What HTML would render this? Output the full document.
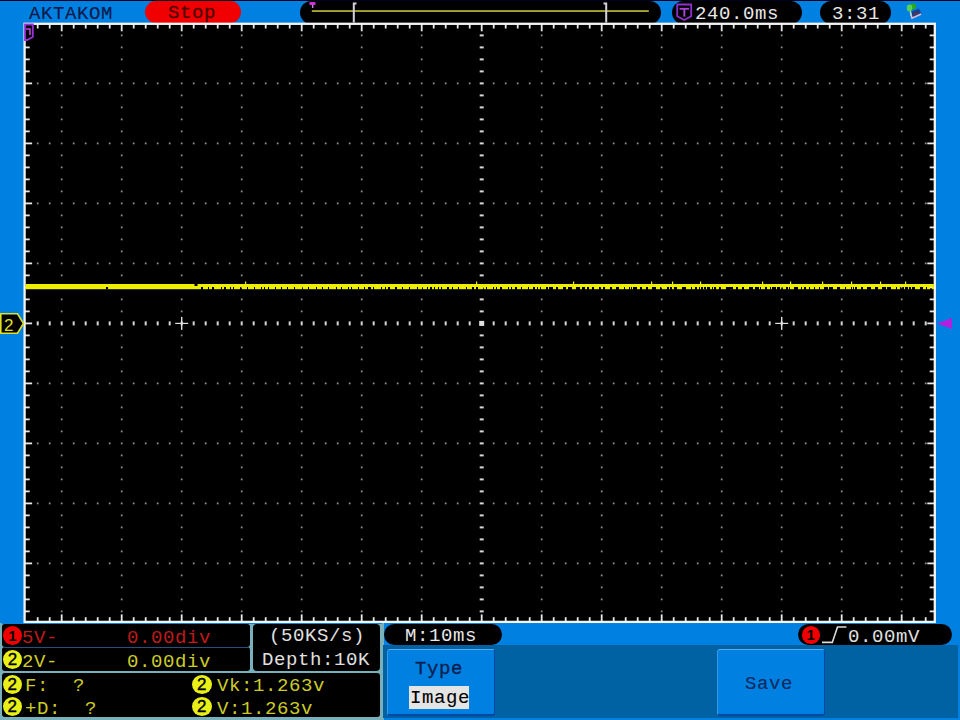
<!DOCTYPE html>
<html><head><meta charset="utf-8">
<style>
html,body{margin:0;padding:0;}
body{width:960px;height:720px;overflow:hidden;position:relative;background:#0080e0;font-family:"Liberation Mono",monospace;}
.a{position:absolute;}
.t{position:absolute;white-space:pre;line-height:1;font-size:19px;letter-spacing:0.6px;}
.pill{position:absolute;background:#000;}
.c{position:absolute;border-radius:50%;text-align:center;color:#000;font-family:"Liberation Sans",sans-serif;font-weight:bold;line-height:1;}
</style></head><body>
<div class="a" style="left:0;top:0;width:960px;height:1px;background:#000020"></div>
<div class="t" style="left:29px;top:5px;font-size:19px;letter-spacing:0.6px;color:#0a1a4a;-webkit-text-stroke:0.15px #0a1a4a">AKTAKOM</div>
<div class="pill" style="left:144.5px;top:1px;width:96px;height:21.5px;border-radius:11px;background:#f00000"></div>
<div class="t" style="left:168px;top:4px;color:#500000;-webkit-text-stroke:0.3px #500000">Stop</div>
<div class="pill" style="left:300px;top:1px;width:361px;height:23px;border-radius:12px"></div>
<div class="pill" style="left:672px;top:1px;width:130px;height:23px;border-radius:12px"></div>
<div class="t" style="left:695px;top:5px;color:#e8e8e8">240.0ms</div>
<div class="pill" style="left:820px;top:1px;width:71px;height:23px;border-radius:12px"></div>
<div class="t" style="left:832px;top:5px;color:#e8e8e8">3:31</div>

<!-- bottom -->
<div class="a" style="left:0;top:623px;width:384px;height:97px;background:#78b0bc"></div>
<div class="a" style="left:1.5px;top:622px;width:380px;height:2px;background:#0080e0"></div>
<div class="a" style="left:383px;top:645px;width:575px;height:73px;background:#0062a2"></div>
<div class="pill" style="left:1.8px;top:623.8px;width:248.2px;height:23.5px;border-radius:3px"></div>
<div class="pill" style="left:1.8px;top:647.3px;width:248.2px;height:23.9px;border-radius:3px"></div>
<div class="a" style="left:4px;top:646.7px;width:244px;height:1.2px;background:#28507a"></div>
<div class="pill" style="left:253.3px;top:623.8px;width:126.7px;height:47.2px;border-radius:4px"></div>
<div class="pill" style="left:1.5px;top:673.3px;width:378.8px;height:43.5px;border-radius:3px"></div>

<div class="c" style="left:2.9px;top:626.3px;width:19px;height:19px;background:#f00000;font-size:15px;line-height:19.5px">1</div>
<div class="t" style="left:22px;top:629px;color:#c01a1a">5V-</div>
<div class="t" style="left:127px;top:629px;color:#c01a1a">0.00div</div>
<div class="c" style="left:2.9px;top:650.2px;width:19px;height:19px;background:#e8f018;font-size:17px;font-weight:normal;-webkit-text-stroke:0.35px #000;line-height:20px">2</div>
<div class="t" style="left:22px;top:653px;color:#cccc26">2V-</div>
<div class="t" style="left:127px;top:653px;color:#cccc26">0.00div</div>

<div class="t" style="left:269px;top:627px;color:#e0e0e0">(50KS/s)</div>
<div class="t" style="left:262px;top:651px;color:#e0e0e0">Depth:10K</div>

<div class="c" style="left:2.7px;top:674.5px;width:19px;height:19px;background:#e8f018;font-size:17px;font-weight:normal;-webkit-text-stroke:0.35px #000;line-height:20px">2</div>
<div class="t" style="left:25px;top:677px;color:#cccc26">F:  ?</div>
<div class="c" style="left:2.7px;top:697.2px;width:19px;height:19px;background:#e8f018;font-size:17px;font-weight:normal;-webkit-text-stroke:0.35px #000;line-height:20px">2</div>
<div class="t" style="left:25px;top:700px;color:#cccc26">+D:  ?</div>
<div class="c" style="left:192px;top:674.5px;width:19.6px;height:19px;background:#e8f018;font-size:17px;font-weight:normal;-webkit-text-stroke:0.35px #000;line-height:20px">2</div>
<div class="t" style="left:217px;top:677px;color:#cccc26">Vk:1.263v</div>
<div class="c" style="left:192px;top:697.3px;width:19.6px;height:19px;background:#e8f018;font-size:17px;font-weight:normal;-webkit-text-stroke:0.35px #000;line-height:20px">2</div>
<div class="t" style="left:217px;top:700px;color:#cccc26">V:1.263v</div>

<div class="pill" style="left:383.5px;top:623.5px;width:118px;height:21.5px;border-radius:11px"></div>
<div class="t" style="left:405px;top:627px;color:#e8e8e8">M:10ms</div>
<div class="pill" style="left:798px;top:623.5px;width:154px;height:21px;border-radius:10.5px"></div>
<div class="c" style="left:801.5px;top:626px;width:18.5px;height:18px;background:#f00000;font-size:15px;line-height:18px">1</div>
<div class="t" style="left:848px;top:628px;color:#e0e0e0">0.00mV</div>

<div class="a" style="left:386.5px;top:648.5px;width:108px;height:67px;background:#0080e0;border-top:1.5px solid #58acf0;border-left:1.5px solid #3a98e8;border-right:1.5px solid #0048a8;border-bottom:2px solid #0048a8;box-sizing:border-box;border-radius:3px"></div>
<div class="t" style="left:415px;top:660px;color:#0a2050;-webkit-text-stroke:0.35px #0a2050">Type</div>
<div class="a" style="left:409px;top:685.5px;width:60px;height:23.5px;background:#e4e4e4"></div>
<div class="t" style="left:410px;top:689px;color:#000;-webkit-text-stroke:0.1px #000">Image</div>
<div class="a" style="left:716.5px;top:648.5px;width:108px;height:67px;background:#0080e0;border-top:1.5px solid #58acf0;border-left:1.5px solid #3a98e8;border-right:1.5px solid #0048a8;border-bottom:2px solid #0048a8;box-sizing:border-box;border-radius:3px"></div>
<div class="t" style="left:745px;top:675px;color:#0a2a60;-webkit-text-stroke:0.1px #0a2a60">Save</div>

<svg class="a" style="left:0;top:0" width="960" height="720" viewBox="0 0 960 720">
<rect x="24.60" y="23.80" width="910.20" height="598.10" fill="#000" />
<rect x="60.80" y="34.50" width="1.80" height="1.80" fill="#8c8c8c" />
<rect x="60.80" y="46.50" width="1.80" height="1.80" fill="#8c8c8c" />
<rect x="60.80" y="58.50" width="1.80" height="1.80" fill="#8c8c8c" />
<rect x="60.80" y="70.50" width="1.80" height="1.80" fill="#8c8c8c" />
<rect x="60.80" y="82.50" width="1.80" height="1.80" fill="#8c8c8c" />
<rect x="60.80" y="94.50" width="1.80" height="1.80" fill="#8c8c8c" />
<rect x="60.80" y="106.50" width="1.80" height="1.80" fill="#8c8c8c" />
<rect x="60.80" y="118.50" width="1.80" height="1.80" fill="#8c8c8c" />
<rect x="60.80" y="130.50" width="1.80" height="1.80" fill="#8c8c8c" />
<rect x="60.80" y="142.50" width="1.80" height="1.80" fill="#8c8c8c" />
<rect x="60.80" y="154.50" width="1.80" height="1.80" fill="#8c8c8c" />
<rect x="60.80" y="166.50" width="1.80" height="1.80" fill="#8c8c8c" />
<rect x="60.80" y="178.50" width="1.80" height="1.80" fill="#8c8c8c" />
<rect x="60.80" y="190.50" width="1.80" height="1.80" fill="#8c8c8c" />
<rect x="60.80" y="202.50" width="1.80" height="1.80" fill="#8c8c8c" />
<rect x="60.80" y="214.50" width="1.80" height="1.80" fill="#8c8c8c" />
<rect x="60.80" y="226.50" width="1.80" height="1.80" fill="#8c8c8c" />
<rect x="60.80" y="238.50" width="1.80" height="1.80" fill="#8c8c8c" />
<rect x="60.80" y="250.50" width="1.80" height="1.80" fill="#8c8c8c" />
<rect x="60.80" y="262.50" width="1.80" height="1.80" fill="#8c8c8c" />
<rect x="60.80" y="274.50" width="1.80" height="1.80" fill="#8c8c8c" />
<rect x="60.80" y="286.50" width="1.80" height="1.80" fill="#8c8c8c" />
<rect x="60.80" y="298.50" width="1.80" height="1.80" fill="#8c8c8c" />
<rect x="60.80" y="310.50" width="1.80" height="1.80" fill="#8c8c8c" />
<rect x="60.80" y="334.50" width="1.80" height="1.80" fill="#8c8c8c" />
<rect x="60.80" y="346.50" width="1.80" height="1.80" fill="#8c8c8c" />
<rect x="60.80" y="358.50" width="1.80" height="1.80" fill="#8c8c8c" />
<rect x="60.80" y="370.50" width="1.80" height="1.80" fill="#8c8c8c" />
<rect x="60.80" y="382.50" width="1.80" height="1.80" fill="#8c8c8c" />
<rect x="60.80" y="394.50" width="1.80" height="1.80" fill="#8c8c8c" />
<rect x="60.80" y="406.50" width="1.80" height="1.80" fill="#8c8c8c" />
<rect x="60.80" y="418.50" width="1.80" height="1.80" fill="#8c8c8c" />
<rect x="60.80" y="430.50" width="1.80" height="1.80" fill="#8c8c8c" />
<rect x="60.80" y="442.50" width="1.80" height="1.80" fill="#8c8c8c" />
<rect x="60.80" y="454.50" width="1.80" height="1.80" fill="#8c8c8c" />
<rect x="60.80" y="466.50" width="1.80" height="1.80" fill="#8c8c8c" />
<rect x="60.80" y="478.50" width="1.80" height="1.80" fill="#8c8c8c" />
<rect x="60.80" y="490.50" width="1.80" height="1.80" fill="#8c8c8c" />
<rect x="60.80" y="502.50" width="1.80" height="1.80" fill="#8c8c8c" />
<rect x="60.80" y="514.50" width="1.80" height="1.80" fill="#8c8c8c" />
<rect x="60.80" y="526.50" width="1.80" height="1.80" fill="#8c8c8c" />
<rect x="60.80" y="538.50" width="1.80" height="1.80" fill="#8c8c8c" />
<rect x="60.80" y="550.50" width="1.80" height="1.80" fill="#8c8c8c" />
<rect x="60.80" y="562.50" width="1.80" height="1.80" fill="#8c8c8c" />
<rect x="60.80" y="574.50" width="1.80" height="1.80" fill="#8c8c8c" />
<rect x="60.80" y="586.50" width="1.80" height="1.80" fill="#8c8c8c" />
<rect x="60.80" y="598.50" width="1.80" height="1.80" fill="#8c8c8c" />
<rect x="60.80" y="610.50" width="1.80" height="1.80" fill="#8c8c8c" />
<rect x="120.80" y="34.50" width="1.80" height="1.80" fill="#8c8c8c" />
<rect x="120.80" y="46.50" width="1.80" height="1.80" fill="#8c8c8c" />
<rect x="120.80" y="58.50" width="1.80" height="1.80" fill="#8c8c8c" />
<rect x="120.80" y="70.50" width="1.80" height="1.80" fill="#8c8c8c" />
<rect x="120.80" y="82.50" width="1.80" height="1.80" fill="#8c8c8c" />
<rect x="120.80" y="94.50" width="1.80" height="1.80" fill="#8c8c8c" />
<rect x="120.80" y="106.50" width="1.80" height="1.80" fill="#8c8c8c" />
<rect x="120.80" y="118.50" width="1.80" height="1.80" fill="#8c8c8c" />
<rect x="120.80" y="130.50" width="1.80" height="1.80" fill="#8c8c8c" />
<rect x="120.80" y="142.50" width="1.80" height="1.80" fill="#8c8c8c" />
<rect x="120.80" y="154.50" width="1.80" height="1.80" fill="#8c8c8c" />
<rect x="120.80" y="166.50" width="1.80" height="1.80" fill="#8c8c8c" />
<rect x="120.80" y="178.50" width="1.80" height="1.80" fill="#8c8c8c" />
<rect x="120.80" y="190.50" width="1.80" height="1.80" fill="#8c8c8c" />
<rect x="120.80" y="202.50" width="1.80" height="1.80" fill="#8c8c8c" />
<rect x="120.80" y="214.50" width="1.80" height="1.80" fill="#8c8c8c" />
<rect x="120.80" y="226.50" width="1.80" height="1.80" fill="#8c8c8c" />
<rect x="120.80" y="238.50" width="1.80" height="1.80" fill="#8c8c8c" />
<rect x="120.80" y="250.50" width="1.80" height="1.80" fill="#8c8c8c" />
<rect x="120.80" y="262.50" width="1.80" height="1.80" fill="#8c8c8c" />
<rect x="120.80" y="274.50" width="1.80" height="1.80" fill="#8c8c8c" />
<rect x="120.80" y="286.50" width="1.80" height="1.80" fill="#8c8c8c" />
<rect x="120.80" y="298.50" width="1.80" height="1.80" fill="#8c8c8c" />
<rect x="120.80" y="310.50" width="1.80" height="1.80" fill="#8c8c8c" />
<rect x="120.80" y="334.50" width="1.80" height="1.80" fill="#8c8c8c" />
<rect x="120.80" y="346.50" width="1.80" height="1.80" fill="#8c8c8c" />
<rect x="120.80" y="358.50" width="1.80" height="1.80" fill="#8c8c8c" />
<rect x="120.80" y="370.50" width="1.80" height="1.80" fill="#8c8c8c" />
<rect x="120.80" y="382.50" width="1.80" height="1.80" fill="#8c8c8c" />
<rect x="120.80" y="394.50" width="1.80" height="1.80" fill="#8c8c8c" />
<rect x="120.80" y="406.50" width="1.80" height="1.80" fill="#8c8c8c" />
<rect x="120.80" y="418.50" width="1.80" height="1.80" fill="#8c8c8c" />
<rect x="120.80" y="430.50" width="1.80" height="1.80" fill="#8c8c8c" />
<rect x="120.80" y="442.50" width="1.80" height="1.80" fill="#8c8c8c" />
<rect x="120.80" y="454.50" width="1.80" height="1.80" fill="#8c8c8c" />
<rect x="120.80" y="466.50" width="1.80" height="1.80" fill="#8c8c8c" />
<rect x="120.80" y="478.50" width="1.80" height="1.80" fill="#8c8c8c" />
<rect x="120.80" y="490.50" width="1.80" height="1.80" fill="#8c8c8c" />
<rect x="120.80" y="502.50" width="1.80" height="1.80" fill="#8c8c8c" />
<rect x="120.80" y="514.50" width="1.80" height="1.80" fill="#8c8c8c" />
<rect x="120.80" y="526.50" width="1.80" height="1.80" fill="#8c8c8c" />
<rect x="120.80" y="538.50" width="1.80" height="1.80" fill="#8c8c8c" />
<rect x="120.80" y="550.50" width="1.80" height="1.80" fill="#8c8c8c" />
<rect x="120.80" y="562.50" width="1.80" height="1.80" fill="#8c8c8c" />
<rect x="120.80" y="574.50" width="1.80" height="1.80" fill="#8c8c8c" />
<rect x="120.80" y="586.50" width="1.80" height="1.80" fill="#8c8c8c" />
<rect x="120.80" y="598.50" width="1.80" height="1.80" fill="#8c8c8c" />
<rect x="120.80" y="610.50" width="1.80" height="1.80" fill="#8c8c8c" />
<rect x="180.80" y="34.50" width="1.80" height="1.80" fill="#8c8c8c" />
<rect x="180.80" y="46.50" width="1.80" height="1.80" fill="#8c8c8c" />
<rect x="180.80" y="58.50" width="1.80" height="1.80" fill="#8c8c8c" />
<rect x="180.80" y="70.50" width="1.80" height="1.80" fill="#8c8c8c" />
<rect x="180.80" y="82.50" width="1.80" height="1.80" fill="#8c8c8c" />
<rect x="180.80" y="94.50" width="1.80" height="1.80" fill="#8c8c8c" />
<rect x="180.80" y="106.50" width="1.80" height="1.80" fill="#8c8c8c" />
<rect x="180.80" y="118.50" width="1.80" height="1.80" fill="#8c8c8c" />
<rect x="180.80" y="130.50" width="1.80" height="1.80" fill="#8c8c8c" />
<rect x="180.80" y="142.50" width="1.80" height="1.80" fill="#8c8c8c" />
<rect x="180.80" y="154.50" width="1.80" height="1.80" fill="#8c8c8c" />
<rect x="180.80" y="166.50" width="1.80" height="1.80" fill="#8c8c8c" />
<rect x="180.80" y="178.50" width="1.80" height="1.80" fill="#8c8c8c" />
<rect x="180.80" y="190.50" width="1.80" height="1.80" fill="#8c8c8c" />
<rect x="180.80" y="202.50" width="1.80" height="1.80" fill="#8c8c8c" />
<rect x="180.80" y="214.50" width="1.80" height="1.80" fill="#8c8c8c" />
<rect x="180.80" y="226.50" width="1.80" height="1.80" fill="#8c8c8c" />
<rect x="180.80" y="238.50" width="1.80" height="1.80" fill="#8c8c8c" />
<rect x="180.80" y="250.50" width="1.80" height="1.80" fill="#8c8c8c" />
<rect x="180.80" y="262.50" width="1.80" height="1.80" fill="#8c8c8c" />
<rect x="180.80" y="274.50" width="1.80" height="1.80" fill="#8c8c8c" />
<rect x="180.80" y="286.50" width="1.80" height="1.80" fill="#8c8c8c" />
<rect x="180.80" y="298.50" width="1.80" height="1.80" fill="#8c8c8c" />
<rect x="180.80" y="310.50" width="1.80" height="1.80" fill="#8c8c8c" />
<rect x="180.80" y="334.50" width="1.80" height="1.80" fill="#8c8c8c" />
<rect x="180.80" y="346.50" width="1.80" height="1.80" fill="#8c8c8c" />
<rect x="180.80" y="358.50" width="1.80" height="1.80" fill="#8c8c8c" />
<rect x="180.80" y="370.50" width="1.80" height="1.80" fill="#8c8c8c" />
<rect x="180.80" y="382.50" width="1.80" height="1.80" fill="#8c8c8c" />
<rect x="180.80" y="394.50" width="1.80" height="1.80" fill="#8c8c8c" />
<rect x="180.80" y="406.50" width="1.80" height="1.80" fill="#8c8c8c" />
<rect x="180.80" y="418.50" width="1.80" height="1.80" fill="#8c8c8c" />
<rect x="180.80" y="430.50" width="1.80" height="1.80" fill="#8c8c8c" />
<rect x="180.80" y="442.50" width="1.80" height="1.80" fill="#8c8c8c" />
<rect x="180.80" y="454.50" width="1.80" height="1.80" fill="#8c8c8c" />
<rect x="180.80" y="466.50" width="1.80" height="1.80" fill="#8c8c8c" />
<rect x="180.80" y="478.50" width="1.80" height="1.80" fill="#8c8c8c" />
<rect x="180.80" y="490.50" width="1.80" height="1.80" fill="#8c8c8c" />
<rect x="180.80" y="502.50" width="1.80" height="1.80" fill="#8c8c8c" />
<rect x="180.80" y="514.50" width="1.80" height="1.80" fill="#8c8c8c" />
<rect x="180.80" y="526.50" width="1.80" height="1.80" fill="#8c8c8c" />
<rect x="180.80" y="538.50" width="1.80" height="1.80" fill="#8c8c8c" />
<rect x="180.80" y="550.50" width="1.80" height="1.80" fill="#8c8c8c" />
<rect x="180.80" y="562.50" width="1.80" height="1.80" fill="#8c8c8c" />
<rect x="180.80" y="574.50" width="1.80" height="1.80" fill="#8c8c8c" />
<rect x="180.80" y="586.50" width="1.80" height="1.80" fill="#8c8c8c" />
<rect x="180.80" y="598.50" width="1.80" height="1.80" fill="#8c8c8c" />
<rect x="180.80" y="610.50" width="1.80" height="1.80" fill="#8c8c8c" />
<rect x="240.80" y="34.50" width="1.80" height="1.80" fill="#8c8c8c" />
<rect x="240.80" y="46.50" width="1.80" height="1.80" fill="#8c8c8c" />
<rect x="240.80" y="58.50" width="1.80" height="1.80" fill="#8c8c8c" />
<rect x="240.80" y="70.50" width="1.80" height="1.80" fill="#8c8c8c" />
<rect x="240.80" y="82.50" width="1.80" height="1.80" fill="#8c8c8c" />
<rect x="240.80" y="94.50" width="1.80" height="1.80" fill="#8c8c8c" />
<rect x="240.80" y="106.50" width="1.80" height="1.80" fill="#8c8c8c" />
<rect x="240.80" y="118.50" width="1.80" height="1.80" fill="#8c8c8c" />
<rect x="240.80" y="130.50" width="1.80" height="1.80" fill="#8c8c8c" />
<rect x="240.80" y="142.50" width="1.80" height="1.80" fill="#8c8c8c" />
<rect x="240.80" y="154.50" width="1.80" height="1.80" fill="#8c8c8c" />
<rect x="240.80" y="166.50" width="1.80" height="1.80" fill="#8c8c8c" />
<rect x="240.80" y="178.50" width="1.80" height="1.80" fill="#8c8c8c" />
<rect x="240.80" y="190.50" width="1.80" height="1.80" fill="#8c8c8c" />
<rect x="240.80" y="202.50" width="1.80" height="1.80" fill="#8c8c8c" />
<rect x="240.80" y="214.50" width="1.80" height="1.80" fill="#8c8c8c" />
<rect x="240.80" y="226.50" width="1.80" height="1.80" fill="#8c8c8c" />
<rect x="240.80" y="238.50" width="1.80" height="1.80" fill="#8c8c8c" />
<rect x="240.80" y="250.50" width="1.80" height="1.80" fill="#8c8c8c" />
<rect x="240.80" y="262.50" width="1.80" height="1.80" fill="#8c8c8c" />
<rect x="240.80" y="274.50" width="1.80" height="1.80" fill="#8c8c8c" />
<rect x="240.80" y="286.50" width="1.80" height="1.80" fill="#8c8c8c" />
<rect x="240.80" y="298.50" width="1.80" height="1.80" fill="#8c8c8c" />
<rect x="240.80" y="310.50" width="1.80" height="1.80" fill="#8c8c8c" />
<rect x="240.80" y="334.50" width="1.80" height="1.80" fill="#8c8c8c" />
<rect x="240.80" y="346.50" width="1.80" height="1.80" fill="#8c8c8c" />
<rect x="240.80" y="358.50" width="1.80" height="1.80" fill="#8c8c8c" />
<rect x="240.80" y="370.50" width="1.80" height="1.80" fill="#8c8c8c" />
<rect x="240.80" y="382.50" width="1.80" height="1.80" fill="#8c8c8c" />
<rect x="240.80" y="394.50" width="1.80" height="1.80" fill="#8c8c8c" />
<rect x="240.80" y="406.50" width="1.80" height="1.80" fill="#8c8c8c" />
<rect x="240.80" y="418.50" width="1.80" height="1.80" fill="#8c8c8c" />
<rect x="240.80" y="430.50" width="1.80" height="1.80" fill="#8c8c8c" />
<rect x="240.80" y="442.50" width="1.80" height="1.80" fill="#8c8c8c" />
<rect x="240.80" y="454.50" width="1.80" height="1.80" fill="#8c8c8c" />
<rect x="240.80" y="466.50" width="1.80" height="1.80" fill="#8c8c8c" />
<rect x="240.80" y="478.50" width="1.80" height="1.80" fill="#8c8c8c" />
<rect x="240.80" y="490.50" width="1.80" height="1.80" fill="#8c8c8c" />
<rect x="240.80" y="502.50" width="1.80" height="1.80" fill="#8c8c8c" />
<rect x="240.80" y="514.50" width="1.80" height="1.80" fill="#8c8c8c" />
<rect x="240.80" y="526.50" width="1.80" height="1.80" fill="#8c8c8c" />
<rect x="240.80" y="538.50" width="1.80" height="1.80" fill="#8c8c8c" />
<rect x="240.80" y="550.50" width="1.80" height="1.80" fill="#8c8c8c" />
<rect x="240.80" y="562.50" width="1.80" height="1.80" fill="#8c8c8c" />
<rect x="240.80" y="574.50" width="1.80" height="1.80" fill="#8c8c8c" />
<rect x="240.80" y="586.50" width="1.80" height="1.80" fill="#8c8c8c" />
<rect x="240.80" y="598.50" width="1.80" height="1.80" fill="#8c8c8c" />
<rect x="240.80" y="610.50" width="1.80" height="1.80" fill="#8c8c8c" />
<rect x="300.80" y="34.50" width="1.80" height="1.80" fill="#8c8c8c" />
<rect x="300.80" y="46.50" width="1.80" height="1.80" fill="#8c8c8c" />
<rect x="300.80" y="58.50" width="1.80" height="1.80" fill="#8c8c8c" />
<rect x="300.80" y="70.50" width="1.80" height="1.80" fill="#8c8c8c" />
<rect x="300.80" y="82.50" width="1.80" height="1.80" fill="#8c8c8c" />
<rect x="300.80" y="94.50" width="1.80" height="1.80" fill="#8c8c8c" />
<rect x="300.80" y="106.50" width="1.80" height="1.80" fill="#8c8c8c" />
<rect x="300.80" y="118.50" width="1.80" height="1.80" fill="#8c8c8c" />
<rect x="300.80" y="130.50" width="1.80" height="1.80" fill="#8c8c8c" />
<rect x="300.80" y="142.50" width="1.80" height="1.80" fill="#8c8c8c" />
<rect x="300.80" y="154.50" width="1.80" height="1.80" fill="#8c8c8c" />
<rect x="300.80" y="166.50" width="1.80" height="1.80" fill="#8c8c8c" />
<rect x="300.80" y="178.50" width="1.80" height="1.80" fill="#8c8c8c" />
<rect x="300.80" y="190.50" width="1.80" height="1.80" fill="#8c8c8c" />
<rect x="300.80" y="202.50" width="1.80" height="1.80" fill="#8c8c8c" />
<rect x="300.80" y="214.50" width="1.80" height="1.80" fill="#8c8c8c" />
<rect x="300.80" y="226.50" width="1.80" height="1.80" fill="#8c8c8c" />
<rect x="300.80" y="238.50" width="1.80" height="1.80" fill="#8c8c8c" />
<rect x="300.80" y="250.50" width="1.80" height="1.80" fill="#8c8c8c" />
<rect x="300.80" y="262.50" width="1.80" height="1.80" fill="#8c8c8c" />
<rect x="300.80" y="274.50" width="1.80" height="1.80" fill="#8c8c8c" />
<rect x="300.80" y="286.50" width="1.80" height="1.80" fill="#8c8c8c" />
<rect x="300.80" y="298.50" width="1.80" height="1.80" fill="#8c8c8c" />
<rect x="300.80" y="310.50" width="1.80" height="1.80" fill="#8c8c8c" />
<rect x="300.80" y="334.50" width="1.80" height="1.80" fill="#8c8c8c" />
<rect x="300.80" y="346.50" width="1.80" height="1.80" fill="#8c8c8c" />
<rect x="300.80" y="358.50" width="1.80" height="1.80" fill="#8c8c8c" />
<rect x="300.80" y="370.50" width="1.80" height="1.80" fill="#8c8c8c" />
<rect x="300.80" y="382.50" width="1.80" height="1.80" fill="#8c8c8c" />
<rect x="300.80" y="394.50" width="1.80" height="1.80" fill="#8c8c8c" />
<rect x="300.80" y="406.50" width="1.80" height="1.80" fill="#8c8c8c" />
<rect x="300.80" y="418.50" width="1.80" height="1.80" fill="#8c8c8c" />
<rect x="300.80" y="430.50" width="1.80" height="1.80" fill="#8c8c8c" />
<rect x="300.80" y="442.50" width="1.80" height="1.80" fill="#8c8c8c" />
<rect x="300.80" y="454.50" width="1.80" height="1.80" fill="#8c8c8c" />
<rect x="300.80" y="466.50" width="1.80" height="1.80" fill="#8c8c8c" />
<rect x="300.80" y="478.50" width="1.80" height="1.80" fill="#8c8c8c" />
<rect x="300.80" y="490.50" width="1.80" height="1.80" fill="#8c8c8c" />
<rect x="300.80" y="502.50" width="1.80" height="1.80" fill="#8c8c8c" />
<rect x="300.80" y="514.50" width="1.80" height="1.80" fill="#8c8c8c" />
<rect x="300.80" y="526.50" width="1.80" height="1.80" fill="#8c8c8c" />
<rect x="300.80" y="538.50" width="1.80" height="1.80" fill="#8c8c8c" />
<rect x="300.80" y="550.50" width="1.80" height="1.80" fill="#8c8c8c" />
<rect x="300.80" y="562.50" width="1.80" height="1.80" fill="#8c8c8c" />
<rect x="300.80" y="574.50" width="1.80" height="1.80" fill="#8c8c8c" />
<rect x="300.80" y="586.50" width="1.80" height="1.80" fill="#8c8c8c" />
<rect x="300.80" y="598.50" width="1.80" height="1.80" fill="#8c8c8c" />
<rect x="300.80" y="610.50" width="1.80" height="1.80" fill="#8c8c8c" />
<rect x="360.80" y="34.50" width="1.80" height="1.80" fill="#8c8c8c" />
<rect x="360.80" y="46.50" width="1.80" height="1.80" fill="#8c8c8c" />
<rect x="360.80" y="58.50" width="1.80" height="1.80" fill="#8c8c8c" />
<rect x="360.80" y="70.50" width="1.80" height="1.80" fill="#8c8c8c" />
<rect x="360.80" y="82.50" width="1.80" height="1.80" fill="#8c8c8c" />
<rect x="360.80" y="94.50" width="1.80" height="1.80" fill="#8c8c8c" />
<rect x="360.80" y="106.50" width="1.80" height="1.80" fill="#8c8c8c" />
<rect x="360.80" y="118.50" width="1.80" height="1.80" fill="#8c8c8c" />
<rect x="360.80" y="130.50" width="1.80" height="1.80" fill="#8c8c8c" />
<rect x="360.80" y="142.50" width="1.80" height="1.80" fill="#8c8c8c" />
<rect x="360.80" y="154.50" width="1.80" height="1.80" fill="#8c8c8c" />
<rect x="360.80" y="166.50" width="1.80" height="1.80" fill="#8c8c8c" />
<rect x="360.80" y="178.50" width="1.80" height="1.80" fill="#8c8c8c" />
<rect x="360.80" y="190.50" width="1.80" height="1.80" fill="#8c8c8c" />
<rect x="360.80" y="202.50" width="1.80" height="1.80" fill="#8c8c8c" />
<rect x="360.80" y="214.50" width="1.80" height="1.80" fill="#8c8c8c" />
<rect x="360.80" y="226.50" width="1.80" height="1.80" fill="#8c8c8c" />
<rect x="360.80" y="238.50" width="1.80" height="1.80" fill="#8c8c8c" />
<rect x="360.80" y="250.50" width="1.80" height="1.80" fill="#8c8c8c" />
<rect x="360.80" y="262.50" width="1.80" height="1.80" fill="#8c8c8c" />
<rect x="360.80" y="274.50" width="1.80" height="1.80" fill="#8c8c8c" />
<rect x="360.80" y="286.50" width="1.80" height="1.80" fill="#8c8c8c" />
<rect x="360.80" y="298.50" width="1.80" height="1.80" fill="#8c8c8c" />
<rect x="360.80" y="310.50" width="1.80" height="1.80" fill="#8c8c8c" />
<rect x="360.80" y="334.50" width="1.80" height="1.80" fill="#8c8c8c" />
<rect x="360.80" y="346.50" width="1.80" height="1.80" fill="#8c8c8c" />
<rect x="360.80" y="358.50" width="1.80" height="1.80" fill="#8c8c8c" />
<rect x="360.80" y="370.50" width="1.80" height="1.80" fill="#8c8c8c" />
<rect x="360.80" y="382.50" width="1.80" height="1.80" fill="#8c8c8c" />
<rect x="360.80" y="394.50" width="1.80" height="1.80" fill="#8c8c8c" />
<rect x="360.80" y="406.50" width="1.80" height="1.80" fill="#8c8c8c" />
<rect x="360.80" y="418.50" width="1.80" height="1.80" fill="#8c8c8c" />
<rect x="360.80" y="430.50" width="1.80" height="1.80" fill="#8c8c8c" />
<rect x="360.80" y="442.50" width="1.80" height="1.80" fill="#8c8c8c" />
<rect x="360.80" y="454.50" width="1.80" height="1.80" fill="#8c8c8c" />
<rect x="360.80" y="466.50" width="1.80" height="1.80" fill="#8c8c8c" />
<rect x="360.80" y="478.50" width="1.80" height="1.80" fill="#8c8c8c" />
<rect x="360.80" y="490.50" width="1.80" height="1.80" fill="#8c8c8c" />
<rect x="360.80" y="502.50" width="1.80" height="1.80" fill="#8c8c8c" />
<rect x="360.80" y="514.50" width="1.80" height="1.80" fill="#8c8c8c" />
<rect x="360.80" y="526.50" width="1.80" height="1.80" fill="#8c8c8c" />
<rect x="360.80" y="538.50" width="1.80" height="1.80" fill="#8c8c8c" />
<rect x="360.80" y="550.50" width="1.80" height="1.80" fill="#8c8c8c" />
<rect x="360.80" y="562.50" width="1.80" height="1.80" fill="#8c8c8c" />
<rect x="360.80" y="574.50" width="1.80" height="1.80" fill="#8c8c8c" />
<rect x="360.80" y="586.50" width="1.80" height="1.80" fill="#8c8c8c" />
<rect x="360.80" y="598.50" width="1.80" height="1.80" fill="#8c8c8c" />
<rect x="360.80" y="610.50" width="1.80" height="1.80" fill="#8c8c8c" />
<rect x="420.80" y="34.50" width="1.80" height="1.80" fill="#8c8c8c" />
<rect x="420.80" y="46.50" width="1.80" height="1.80" fill="#8c8c8c" />
<rect x="420.80" y="58.50" width="1.80" height="1.80" fill="#8c8c8c" />
<rect x="420.80" y="70.50" width="1.80" height="1.80" fill="#8c8c8c" />
<rect x="420.80" y="82.50" width="1.80" height="1.80" fill="#8c8c8c" />
<rect x="420.80" y="94.50" width="1.80" height="1.80" fill="#8c8c8c" />
<rect x="420.80" y="106.50" width="1.80" height="1.80" fill="#8c8c8c" />
<rect x="420.80" y="118.50" width="1.80" height="1.80" fill="#8c8c8c" />
<rect x="420.80" y="130.50" width="1.80" height="1.80" fill="#8c8c8c" />
<rect x="420.80" y="142.50" width="1.80" height="1.80" fill="#8c8c8c" />
<rect x="420.80" y="154.50" width="1.80" height="1.80" fill="#8c8c8c" />
<rect x="420.80" y="166.50" width="1.80" height="1.80" fill="#8c8c8c" />
<rect x="420.80" y="178.50" width="1.80" height="1.80" fill="#8c8c8c" />
<rect x="420.80" y="190.50" width="1.80" height="1.80" fill="#8c8c8c" />
<rect x="420.80" y="202.50" width="1.80" height="1.80" fill="#8c8c8c" />
<rect x="420.80" y="214.50" width="1.80" height="1.80" fill="#8c8c8c" />
<rect x="420.80" y="226.50" width="1.80" height="1.80" fill="#8c8c8c" />
<rect x="420.80" y="238.50" width="1.80" height="1.80" fill="#8c8c8c" />
<rect x="420.80" y="250.50" width="1.80" height="1.80" fill="#8c8c8c" />
<rect x="420.80" y="262.50" width="1.80" height="1.80" fill="#8c8c8c" />
<rect x="420.80" y="274.50" width="1.80" height="1.80" fill="#8c8c8c" />
<rect x="420.80" y="286.50" width="1.80" height="1.80" fill="#8c8c8c" />
<rect x="420.80" y="298.50" width="1.80" height="1.80" fill="#8c8c8c" />
<rect x="420.80" y="310.50" width="1.80" height="1.80" fill="#8c8c8c" />
<rect x="420.80" y="334.50" width="1.80" height="1.80" fill="#8c8c8c" />
<rect x="420.80" y="346.50" width="1.80" height="1.80" fill="#8c8c8c" />
<rect x="420.80" y="358.50" width="1.80" height="1.80" fill="#8c8c8c" />
<rect x="420.80" y="370.50" width="1.80" height="1.80" fill="#8c8c8c" />
<rect x="420.80" y="382.50" width="1.80" height="1.80" fill="#8c8c8c" />
<rect x="420.80" y="394.50" width="1.80" height="1.80" fill="#8c8c8c" />
<rect x="420.80" y="406.50" width="1.80" height="1.80" fill="#8c8c8c" />
<rect x="420.80" y="418.50" width="1.80" height="1.80" fill="#8c8c8c" />
<rect x="420.80" y="430.50" width="1.80" height="1.80" fill="#8c8c8c" />
<rect x="420.80" y="442.50" width="1.80" height="1.80" fill="#8c8c8c" />
<rect x="420.80" y="454.50" width="1.80" height="1.80" fill="#8c8c8c" />
<rect x="420.80" y="466.50" width="1.80" height="1.80" fill="#8c8c8c" />
<rect x="420.80" y="478.50" width="1.80" height="1.80" fill="#8c8c8c" />
<rect x="420.80" y="490.50" width="1.80" height="1.80" fill="#8c8c8c" />
<rect x="420.80" y="502.50" width="1.80" height="1.80" fill="#8c8c8c" />
<rect x="420.80" y="514.50" width="1.80" height="1.80" fill="#8c8c8c" />
<rect x="420.80" y="526.50" width="1.80" height="1.80" fill="#8c8c8c" />
<rect x="420.80" y="538.50" width="1.80" height="1.80" fill="#8c8c8c" />
<rect x="420.80" y="550.50" width="1.80" height="1.80" fill="#8c8c8c" />
<rect x="420.80" y="562.50" width="1.80" height="1.80" fill="#8c8c8c" />
<rect x="420.80" y="574.50" width="1.80" height="1.80" fill="#8c8c8c" />
<rect x="420.80" y="586.50" width="1.80" height="1.80" fill="#8c8c8c" />
<rect x="420.80" y="598.50" width="1.80" height="1.80" fill="#8c8c8c" />
<rect x="420.80" y="610.50" width="1.80" height="1.80" fill="#8c8c8c" />
<rect x="540.80" y="34.50" width="1.80" height="1.80" fill="#8c8c8c" />
<rect x="540.80" y="46.50" width="1.80" height="1.80" fill="#8c8c8c" />
<rect x="540.80" y="58.50" width="1.80" height="1.80" fill="#8c8c8c" />
<rect x="540.80" y="70.50" width="1.80" height="1.80" fill="#8c8c8c" />
<rect x="540.80" y="82.50" width="1.80" height="1.80" fill="#8c8c8c" />
<rect x="540.80" y="94.50" width="1.80" height="1.80" fill="#8c8c8c" />
<rect x="540.80" y="106.50" width="1.80" height="1.80" fill="#8c8c8c" />
<rect x="540.80" y="118.50" width="1.80" height="1.80" fill="#8c8c8c" />
<rect x="540.80" y="130.50" width="1.80" height="1.80" fill="#8c8c8c" />
<rect x="540.80" y="142.50" width="1.80" height="1.80" fill="#8c8c8c" />
<rect x="540.80" y="154.50" width="1.80" height="1.80" fill="#8c8c8c" />
<rect x="540.80" y="166.50" width="1.80" height="1.80" fill="#8c8c8c" />
<rect x="540.80" y="178.50" width="1.80" height="1.80" fill="#8c8c8c" />
<rect x="540.80" y="190.50" width="1.80" height="1.80" fill="#8c8c8c" />
<rect x="540.80" y="202.50" width="1.80" height="1.80" fill="#8c8c8c" />
<rect x="540.80" y="214.50" width="1.80" height="1.80" fill="#8c8c8c" />
<rect x="540.80" y="226.50" width="1.80" height="1.80" fill="#8c8c8c" />
<rect x="540.80" y="238.50" width="1.80" height="1.80" fill="#8c8c8c" />
<rect x="540.80" y="250.50" width="1.80" height="1.80" fill="#8c8c8c" />
<rect x="540.80" y="262.50" width="1.80" height="1.80" fill="#8c8c8c" />
<rect x="540.80" y="274.50" width="1.80" height="1.80" fill="#8c8c8c" />
<rect x="540.80" y="286.50" width="1.80" height="1.80" fill="#8c8c8c" />
<rect x="540.80" y="298.50" width="1.80" height="1.80" fill="#8c8c8c" />
<rect x="540.80" y="310.50" width="1.80" height="1.80" fill="#8c8c8c" />
<rect x="540.80" y="334.50" width="1.80" height="1.80" fill="#8c8c8c" />
<rect x="540.80" y="346.50" width="1.80" height="1.80" fill="#8c8c8c" />
<rect x="540.80" y="358.50" width="1.80" height="1.80" fill="#8c8c8c" />
<rect x="540.80" y="370.50" width="1.80" height="1.80" fill="#8c8c8c" />
<rect x="540.80" y="382.50" width="1.80" height="1.80" fill="#8c8c8c" />
<rect x="540.80" y="394.50" width="1.80" height="1.80" fill="#8c8c8c" />
<rect x="540.80" y="406.50" width="1.80" height="1.80" fill="#8c8c8c" />
<rect x="540.80" y="418.50" width="1.80" height="1.80" fill="#8c8c8c" />
<rect x="540.80" y="430.50" width="1.80" height="1.80" fill="#8c8c8c" />
<rect x="540.80" y="442.50" width="1.80" height="1.80" fill="#8c8c8c" />
<rect x="540.80" y="454.50" width="1.80" height="1.80" fill="#8c8c8c" />
<rect x="540.80" y="466.50" width="1.80" height="1.80" fill="#8c8c8c" />
<rect x="540.80" y="478.50" width="1.80" height="1.80" fill="#8c8c8c" />
<rect x="540.80" y="490.50" width="1.80" height="1.80" fill="#8c8c8c" />
<rect x="540.80" y="502.50" width="1.80" height="1.80" fill="#8c8c8c" />
<rect x="540.80" y="514.50" width="1.80" height="1.80" fill="#8c8c8c" />
<rect x="540.80" y="526.50" width="1.80" height="1.80" fill="#8c8c8c" />
<rect x="540.80" y="538.50" width="1.80" height="1.80" fill="#8c8c8c" />
<rect x="540.80" y="550.50" width="1.80" height="1.80" fill="#8c8c8c" />
<rect x="540.80" y="562.50" width="1.80" height="1.80" fill="#8c8c8c" />
<rect x="540.80" y="574.50" width="1.80" height="1.80" fill="#8c8c8c" />
<rect x="540.80" y="586.50" width="1.80" height="1.80" fill="#8c8c8c" />
<rect x="540.80" y="598.50" width="1.80" height="1.80" fill="#8c8c8c" />
<rect x="540.80" y="610.50" width="1.80" height="1.80" fill="#8c8c8c" />
<rect x="600.80" y="34.50" width="1.80" height="1.80" fill="#8c8c8c" />
<rect x="600.80" y="46.50" width="1.80" height="1.80" fill="#8c8c8c" />
<rect x="600.80" y="58.50" width="1.80" height="1.80" fill="#8c8c8c" />
<rect x="600.80" y="70.50" width="1.80" height="1.80" fill="#8c8c8c" />
<rect x="600.80" y="82.50" width="1.80" height="1.80" fill="#8c8c8c" />
<rect x="600.80" y="94.50" width="1.80" height="1.80" fill="#8c8c8c" />
<rect x="600.80" y="106.50" width="1.80" height="1.80" fill="#8c8c8c" />
<rect x="600.80" y="118.50" width="1.80" height="1.80" fill="#8c8c8c" />
<rect x="600.80" y="130.50" width="1.80" height="1.80" fill="#8c8c8c" />
<rect x="600.80" y="142.50" width="1.80" height="1.80" fill="#8c8c8c" />
<rect x="600.80" y="154.50" width="1.80" height="1.80" fill="#8c8c8c" />
<rect x="600.80" y="166.50" width="1.80" height="1.80" fill="#8c8c8c" />
<rect x="600.80" y="178.50" width="1.80" height="1.80" fill="#8c8c8c" />
<rect x="600.80" y="190.50" width="1.80" height="1.80" fill="#8c8c8c" />
<rect x="600.80" y="202.50" width="1.80" height="1.80" fill="#8c8c8c" />
<rect x="600.80" y="214.50" width="1.80" height="1.80" fill="#8c8c8c" />
<rect x="600.80" y="226.50" width="1.80" height="1.80" fill="#8c8c8c" />
<rect x="600.80" y="238.50" width="1.80" height="1.80" fill="#8c8c8c" />
<rect x="600.80" y="250.50" width="1.80" height="1.80" fill="#8c8c8c" />
<rect x="600.80" y="262.50" width="1.80" height="1.80" fill="#8c8c8c" />
<rect x="600.80" y="274.50" width="1.80" height="1.80" fill="#8c8c8c" />
<rect x="600.80" y="286.50" width="1.80" height="1.80" fill="#8c8c8c" />
<rect x="600.80" y="298.50" width="1.80" height="1.80" fill="#8c8c8c" />
<rect x="600.80" y="310.50" width="1.80" height="1.80" fill="#8c8c8c" />
<rect x="600.80" y="334.50" width="1.80" height="1.80" fill="#8c8c8c" />
<rect x="600.80" y="346.50" width="1.80" height="1.80" fill="#8c8c8c" />
<rect x="600.80" y="358.50" width="1.80" height="1.80" fill="#8c8c8c" />
<rect x="600.80" y="370.50" width="1.80" height="1.80" fill="#8c8c8c" />
<rect x="600.80" y="382.50" width="1.80" height="1.80" fill="#8c8c8c" />
<rect x="600.80" y="394.50" width="1.80" height="1.80" fill="#8c8c8c" />
<rect x="600.80" y="406.50" width="1.80" height="1.80" fill="#8c8c8c" />
<rect x="600.80" y="418.50" width="1.80" height="1.80" fill="#8c8c8c" />
<rect x="600.80" y="430.50" width="1.80" height="1.80" fill="#8c8c8c" />
<rect x="600.80" y="442.50" width="1.80" height="1.80" fill="#8c8c8c" />
<rect x="600.80" y="454.50" width="1.80" height="1.80" fill="#8c8c8c" />
<rect x="600.80" y="466.50" width="1.80" height="1.80" fill="#8c8c8c" />
<rect x="600.80" y="478.50" width="1.80" height="1.80" fill="#8c8c8c" />
<rect x="600.80" y="490.50" width="1.80" height="1.80" fill="#8c8c8c" />
<rect x="600.80" y="502.50" width="1.80" height="1.80" fill="#8c8c8c" />
<rect x="600.80" y="514.50" width="1.80" height="1.80" fill="#8c8c8c" />
<rect x="600.80" y="526.50" width="1.80" height="1.80" fill="#8c8c8c" />
<rect x="600.80" y="538.50" width="1.80" height="1.80" fill="#8c8c8c" />
<rect x="600.80" y="550.50" width="1.80" height="1.80" fill="#8c8c8c" />
<rect x="600.80" y="562.50" width="1.80" height="1.80" fill="#8c8c8c" />
<rect x="600.80" y="574.50" width="1.80" height="1.80" fill="#8c8c8c" />
<rect x="600.80" y="586.50" width="1.80" height="1.80" fill="#8c8c8c" />
<rect x="600.80" y="598.50" width="1.80" height="1.80" fill="#8c8c8c" />
<rect x="600.80" y="610.50" width="1.80" height="1.80" fill="#8c8c8c" />
<rect x="660.80" y="34.50" width="1.80" height="1.80" fill="#8c8c8c" />
<rect x="660.80" y="46.50" width="1.80" height="1.80" fill="#8c8c8c" />
<rect x="660.80" y="58.50" width="1.80" height="1.80" fill="#8c8c8c" />
<rect x="660.80" y="70.50" width="1.80" height="1.80" fill="#8c8c8c" />
<rect x="660.80" y="82.50" width="1.80" height="1.80" fill="#8c8c8c" />
<rect x="660.80" y="94.50" width="1.80" height="1.80" fill="#8c8c8c" />
<rect x="660.80" y="106.50" width="1.80" height="1.80" fill="#8c8c8c" />
<rect x="660.80" y="118.50" width="1.80" height="1.80" fill="#8c8c8c" />
<rect x="660.80" y="130.50" width="1.80" height="1.80" fill="#8c8c8c" />
<rect x="660.80" y="142.50" width="1.80" height="1.80" fill="#8c8c8c" />
<rect x="660.80" y="154.50" width="1.80" height="1.80" fill="#8c8c8c" />
<rect x="660.80" y="166.50" width="1.80" height="1.80" fill="#8c8c8c" />
<rect x="660.80" y="178.50" width="1.80" height="1.80" fill="#8c8c8c" />
<rect x="660.80" y="190.50" width="1.80" height="1.80" fill="#8c8c8c" />
<rect x="660.80" y="202.50" width="1.80" height="1.80" fill="#8c8c8c" />
<rect x="660.80" y="214.50" width="1.80" height="1.80" fill="#8c8c8c" />
<rect x="660.80" y="226.50" width="1.80" height="1.80" fill="#8c8c8c" />
<rect x="660.80" y="238.50" width="1.80" height="1.80" fill="#8c8c8c" />
<rect x="660.80" y="250.50" width="1.80" height="1.80" fill="#8c8c8c" />
<rect x="660.80" y="262.50" width="1.80" height="1.80" fill="#8c8c8c" />
<rect x="660.80" y="274.50" width="1.80" height="1.80" fill="#8c8c8c" />
<rect x="660.80" y="286.50" width="1.80" height="1.80" fill="#8c8c8c" />
<rect x="660.80" y="298.50" width="1.80" height="1.80" fill="#8c8c8c" />
<rect x="660.80" y="310.50" width="1.80" height="1.80" fill="#8c8c8c" />
<rect x="660.80" y="334.50" width="1.80" height="1.80" fill="#8c8c8c" />
<rect x="660.80" y="346.50" width="1.80" height="1.80" fill="#8c8c8c" />
<rect x="660.80" y="358.50" width="1.80" height="1.80" fill="#8c8c8c" />
<rect x="660.80" y="370.50" width="1.80" height="1.80" fill="#8c8c8c" />
<rect x="660.80" y="382.50" width="1.80" height="1.80" fill="#8c8c8c" />
<rect x="660.80" y="394.50" width="1.80" height="1.80" fill="#8c8c8c" />
<rect x="660.80" y="406.50" width="1.80" height="1.80" fill="#8c8c8c" />
<rect x="660.80" y="418.50" width="1.80" height="1.80" fill="#8c8c8c" />
<rect x="660.80" y="430.50" width="1.80" height="1.80" fill="#8c8c8c" />
<rect x="660.80" y="442.50" width="1.80" height="1.80" fill="#8c8c8c" />
<rect x="660.80" y="454.50" width="1.80" height="1.80" fill="#8c8c8c" />
<rect x="660.80" y="466.50" width="1.80" height="1.80" fill="#8c8c8c" />
<rect x="660.80" y="478.50" width="1.80" height="1.80" fill="#8c8c8c" />
<rect x="660.80" y="490.50" width="1.80" height="1.80" fill="#8c8c8c" />
<rect x="660.80" y="502.50" width="1.80" height="1.80" fill="#8c8c8c" />
<rect x="660.80" y="514.50" width="1.80" height="1.80" fill="#8c8c8c" />
<rect x="660.80" y="526.50" width="1.80" height="1.80" fill="#8c8c8c" />
<rect x="660.80" y="538.50" width="1.80" height="1.80" fill="#8c8c8c" />
<rect x="660.80" y="550.50" width="1.80" height="1.80" fill="#8c8c8c" />
<rect x="660.80" y="562.50" width="1.80" height="1.80" fill="#8c8c8c" />
<rect x="660.80" y="574.50" width="1.80" height="1.80" fill="#8c8c8c" />
<rect x="660.80" y="586.50" width="1.80" height="1.80" fill="#8c8c8c" />
<rect x="660.80" y="598.50" width="1.80" height="1.80" fill="#8c8c8c" />
<rect x="660.80" y="610.50" width="1.80" height="1.80" fill="#8c8c8c" />
<rect x="720.80" y="34.50" width="1.80" height="1.80" fill="#8c8c8c" />
<rect x="720.80" y="46.50" width="1.80" height="1.80" fill="#8c8c8c" />
<rect x="720.80" y="58.50" width="1.80" height="1.80" fill="#8c8c8c" />
<rect x="720.80" y="70.50" width="1.80" height="1.80" fill="#8c8c8c" />
<rect x="720.80" y="82.50" width="1.80" height="1.80" fill="#8c8c8c" />
<rect x="720.80" y="94.50" width="1.80" height="1.80" fill="#8c8c8c" />
<rect x="720.80" y="106.50" width="1.80" height="1.80" fill="#8c8c8c" />
<rect x="720.80" y="118.50" width="1.80" height="1.80" fill="#8c8c8c" />
<rect x="720.80" y="130.50" width="1.80" height="1.80" fill="#8c8c8c" />
<rect x="720.80" y="142.50" width="1.80" height="1.80" fill="#8c8c8c" />
<rect x="720.80" y="154.50" width="1.80" height="1.80" fill="#8c8c8c" />
<rect x="720.80" y="166.50" width="1.80" height="1.80" fill="#8c8c8c" />
<rect x="720.80" y="178.50" width="1.80" height="1.80" fill="#8c8c8c" />
<rect x="720.80" y="190.50" width="1.80" height="1.80" fill="#8c8c8c" />
<rect x="720.80" y="202.50" width="1.80" height="1.80" fill="#8c8c8c" />
<rect x="720.80" y="214.50" width="1.80" height="1.80" fill="#8c8c8c" />
<rect x="720.80" y="226.50" width="1.80" height="1.80" fill="#8c8c8c" />
<rect x="720.80" y="238.50" width="1.80" height="1.80" fill="#8c8c8c" />
<rect x="720.80" y="250.50" width="1.80" height="1.80" fill="#8c8c8c" />
<rect x="720.80" y="262.50" width="1.80" height="1.80" fill="#8c8c8c" />
<rect x="720.80" y="274.50" width="1.80" height="1.80" fill="#8c8c8c" />
<rect x="720.80" y="286.50" width="1.80" height="1.80" fill="#8c8c8c" />
<rect x="720.80" y="298.50" width="1.80" height="1.80" fill="#8c8c8c" />
<rect x="720.80" y="310.50" width="1.80" height="1.80" fill="#8c8c8c" />
<rect x="720.80" y="334.50" width="1.80" height="1.80" fill="#8c8c8c" />
<rect x="720.80" y="346.50" width="1.80" height="1.80" fill="#8c8c8c" />
<rect x="720.80" y="358.50" width="1.80" height="1.80" fill="#8c8c8c" />
<rect x="720.80" y="370.50" width="1.80" height="1.80" fill="#8c8c8c" />
<rect x="720.80" y="382.50" width="1.80" height="1.80" fill="#8c8c8c" />
<rect x="720.80" y="394.50" width="1.80" height="1.80" fill="#8c8c8c" />
<rect x="720.80" y="406.50" width="1.80" height="1.80" fill="#8c8c8c" />
<rect x="720.80" y="418.50" width="1.80" height="1.80" fill="#8c8c8c" />
<rect x="720.80" y="430.50" width="1.80" height="1.80" fill="#8c8c8c" />
<rect x="720.80" y="442.50" width="1.80" height="1.80" fill="#8c8c8c" />
<rect x="720.80" y="454.50" width="1.80" height="1.80" fill="#8c8c8c" />
<rect x="720.80" y="466.50" width="1.80" height="1.80" fill="#8c8c8c" />
<rect x="720.80" y="478.50" width="1.80" height="1.80" fill="#8c8c8c" />
<rect x="720.80" y="490.50" width="1.80" height="1.80" fill="#8c8c8c" />
<rect x="720.80" y="502.50" width="1.80" height="1.80" fill="#8c8c8c" />
<rect x="720.80" y="514.50" width="1.80" height="1.80" fill="#8c8c8c" />
<rect x="720.80" y="526.50" width="1.80" height="1.80" fill="#8c8c8c" />
<rect x="720.80" y="538.50" width="1.80" height="1.80" fill="#8c8c8c" />
<rect x="720.80" y="550.50" width="1.80" height="1.80" fill="#8c8c8c" />
<rect x="720.80" y="562.50" width="1.80" height="1.80" fill="#8c8c8c" />
<rect x="720.80" y="574.50" width="1.80" height="1.80" fill="#8c8c8c" />
<rect x="720.80" y="586.50" width="1.80" height="1.80" fill="#8c8c8c" />
<rect x="720.80" y="598.50" width="1.80" height="1.80" fill="#8c8c8c" />
<rect x="720.80" y="610.50" width="1.80" height="1.80" fill="#8c8c8c" />
<rect x="780.80" y="34.50" width="1.80" height="1.80" fill="#8c8c8c" />
<rect x="780.80" y="46.50" width="1.80" height="1.80" fill="#8c8c8c" />
<rect x="780.80" y="58.50" width="1.80" height="1.80" fill="#8c8c8c" />
<rect x="780.80" y="70.50" width="1.80" height="1.80" fill="#8c8c8c" />
<rect x="780.80" y="82.50" width="1.80" height="1.80" fill="#8c8c8c" />
<rect x="780.80" y="94.50" width="1.80" height="1.80" fill="#8c8c8c" />
<rect x="780.80" y="106.50" width="1.80" height="1.80" fill="#8c8c8c" />
<rect x="780.80" y="118.50" width="1.80" height="1.80" fill="#8c8c8c" />
<rect x="780.80" y="130.50" width="1.80" height="1.80" fill="#8c8c8c" />
<rect x="780.80" y="142.50" width="1.80" height="1.80" fill="#8c8c8c" />
<rect x="780.80" y="154.50" width="1.80" height="1.80" fill="#8c8c8c" />
<rect x="780.80" y="166.50" width="1.80" height="1.80" fill="#8c8c8c" />
<rect x="780.80" y="178.50" width="1.80" height="1.80" fill="#8c8c8c" />
<rect x="780.80" y="190.50" width="1.80" height="1.80" fill="#8c8c8c" />
<rect x="780.80" y="202.50" width="1.80" height="1.80" fill="#8c8c8c" />
<rect x="780.80" y="214.50" width="1.80" height="1.80" fill="#8c8c8c" />
<rect x="780.80" y="226.50" width="1.80" height="1.80" fill="#8c8c8c" />
<rect x="780.80" y="238.50" width="1.80" height="1.80" fill="#8c8c8c" />
<rect x="780.80" y="250.50" width="1.80" height="1.80" fill="#8c8c8c" />
<rect x="780.80" y="262.50" width="1.80" height="1.80" fill="#8c8c8c" />
<rect x="780.80" y="274.50" width="1.80" height="1.80" fill="#8c8c8c" />
<rect x="780.80" y="286.50" width="1.80" height="1.80" fill="#8c8c8c" />
<rect x="780.80" y="298.50" width="1.80" height="1.80" fill="#8c8c8c" />
<rect x="780.80" y="310.50" width="1.80" height="1.80" fill="#8c8c8c" />
<rect x="780.80" y="334.50" width="1.80" height="1.80" fill="#8c8c8c" />
<rect x="780.80" y="346.50" width="1.80" height="1.80" fill="#8c8c8c" />
<rect x="780.80" y="358.50" width="1.80" height="1.80" fill="#8c8c8c" />
<rect x="780.80" y="370.50" width="1.80" height="1.80" fill="#8c8c8c" />
<rect x="780.80" y="382.50" width="1.80" height="1.80" fill="#8c8c8c" />
<rect x="780.80" y="394.50" width="1.80" height="1.80" fill="#8c8c8c" />
<rect x="780.80" y="406.50" width="1.80" height="1.80" fill="#8c8c8c" />
<rect x="780.80" y="418.50" width="1.80" height="1.80" fill="#8c8c8c" />
<rect x="780.80" y="430.50" width="1.80" height="1.80" fill="#8c8c8c" />
<rect x="780.80" y="442.50" width="1.80" height="1.80" fill="#8c8c8c" />
<rect x="780.80" y="454.50" width="1.80" height="1.80" fill="#8c8c8c" />
<rect x="780.80" y="466.50" width="1.80" height="1.80" fill="#8c8c8c" />
<rect x="780.80" y="478.50" width="1.80" height="1.80" fill="#8c8c8c" />
<rect x="780.80" y="490.50" width="1.80" height="1.80" fill="#8c8c8c" />
<rect x="780.80" y="502.50" width="1.80" height="1.80" fill="#8c8c8c" />
<rect x="780.80" y="514.50" width="1.80" height="1.80" fill="#8c8c8c" />
<rect x="780.80" y="526.50" width="1.80" height="1.80" fill="#8c8c8c" />
<rect x="780.80" y="538.50" width="1.80" height="1.80" fill="#8c8c8c" />
<rect x="780.80" y="550.50" width="1.80" height="1.80" fill="#8c8c8c" />
<rect x="780.80" y="562.50" width="1.80" height="1.80" fill="#8c8c8c" />
<rect x="780.80" y="574.50" width="1.80" height="1.80" fill="#8c8c8c" />
<rect x="780.80" y="586.50" width="1.80" height="1.80" fill="#8c8c8c" />
<rect x="780.80" y="598.50" width="1.80" height="1.80" fill="#8c8c8c" />
<rect x="780.80" y="610.50" width="1.80" height="1.80" fill="#8c8c8c" />
<rect x="840.80" y="34.50" width="1.80" height="1.80" fill="#8c8c8c" />
<rect x="840.80" y="46.50" width="1.80" height="1.80" fill="#8c8c8c" />
<rect x="840.80" y="58.50" width="1.80" height="1.80" fill="#8c8c8c" />
<rect x="840.80" y="70.50" width="1.80" height="1.80" fill="#8c8c8c" />
<rect x="840.80" y="82.50" width="1.80" height="1.80" fill="#8c8c8c" />
<rect x="840.80" y="94.50" width="1.80" height="1.80" fill="#8c8c8c" />
<rect x="840.80" y="106.50" width="1.80" height="1.80" fill="#8c8c8c" />
<rect x="840.80" y="118.50" width="1.80" height="1.80" fill="#8c8c8c" />
<rect x="840.80" y="130.50" width="1.80" height="1.80" fill="#8c8c8c" />
<rect x="840.80" y="142.50" width="1.80" height="1.80" fill="#8c8c8c" />
<rect x="840.80" y="154.50" width="1.80" height="1.80" fill="#8c8c8c" />
<rect x="840.80" y="166.50" width="1.80" height="1.80" fill="#8c8c8c" />
<rect x="840.80" y="178.50" width="1.80" height="1.80" fill="#8c8c8c" />
<rect x="840.80" y="190.50" width="1.80" height="1.80" fill="#8c8c8c" />
<rect x="840.80" y="202.50" width="1.80" height="1.80" fill="#8c8c8c" />
<rect x="840.80" y="214.50" width="1.80" height="1.80" fill="#8c8c8c" />
<rect x="840.80" y="226.50" width="1.80" height="1.80" fill="#8c8c8c" />
<rect x="840.80" y="238.50" width="1.80" height="1.80" fill="#8c8c8c" />
<rect x="840.80" y="250.50" width="1.80" height="1.80" fill="#8c8c8c" />
<rect x="840.80" y="262.50" width="1.80" height="1.80" fill="#8c8c8c" />
<rect x="840.80" y="274.50" width="1.80" height="1.80" fill="#8c8c8c" />
<rect x="840.80" y="286.50" width="1.80" height="1.80" fill="#8c8c8c" />
<rect x="840.80" y="298.50" width="1.80" height="1.80" fill="#8c8c8c" />
<rect x="840.80" y="310.50" width="1.80" height="1.80" fill="#8c8c8c" />
<rect x="840.80" y="334.50" width="1.80" height="1.80" fill="#8c8c8c" />
<rect x="840.80" y="346.50" width="1.80" height="1.80" fill="#8c8c8c" />
<rect x="840.80" y="358.50" width="1.80" height="1.80" fill="#8c8c8c" />
<rect x="840.80" y="370.50" width="1.80" height="1.80" fill="#8c8c8c" />
<rect x="840.80" y="382.50" width="1.80" height="1.80" fill="#8c8c8c" />
<rect x="840.80" y="394.50" width="1.80" height="1.80" fill="#8c8c8c" />
<rect x="840.80" y="406.50" width="1.80" height="1.80" fill="#8c8c8c" />
<rect x="840.80" y="418.50" width="1.80" height="1.80" fill="#8c8c8c" />
<rect x="840.80" y="430.50" width="1.80" height="1.80" fill="#8c8c8c" />
<rect x="840.80" y="442.50" width="1.80" height="1.80" fill="#8c8c8c" />
<rect x="840.80" y="454.50" width="1.80" height="1.80" fill="#8c8c8c" />
<rect x="840.80" y="466.50" width="1.80" height="1.80" fill="#8c8c8c" />
<rect x="840.80" y="478.50" width="1.80" height="1.80" fill="#8c8c8c" />
<rect x="840.80" y="490.50" width="1.80" height="1.80" fill="#8c8c8c" />
<rect x="840.80" y="502.50" width="1.80" height="1.80" fill="#8c8c8c" />
<rect x="840.80" y="514.50" width="1.80" height="1.80" fill="#8c8c8c" />
<rect x="840.80" y="526.50" width="1.80" height="1.80" fill="#8c8c8c" />
<rect x="840.80" y="538.50" width="1.80" height="1.80" fill="#8c8c8c" />
<rect x="840.80" y="550.50" width="1.80" height="1.80" fill="#8c8c8c" />
<rect x="840.80" y="562.50" width="1.80" height="1.80" fill="#8c8c8c" />
<rect x="840.80" y="574.50" width="1.80" height="1.80" fill="#8c8c8c" />
<rect x="840.80" y="586.50" width="1.80" height="1.80" fill="#8c8c8c" />
<rect x="840.80" y="598.50" width="1.80" height="1.80" fill="#8c8c8c" />
<rect x="840.80" y="610.50" width="1.80" height="1.80" fill="#8c8c8c" />
<rect x="900.80" y="34.50" width="1.80" height="1.80" fill="#8c8c8c" />
<rect x="900.80" y="46.50" width="1.80" height="1.80" fill="#8c8c8c" />
<rect x="900.80" y="58.50" width="1.80" height="1.80" fill="#8c8c8c" />
<rect x="900.80" y="70.50" width="1.80" height="1.80" fill="#8c8c8c" />
<rect x="900.80" y="82.50" width="1.80" height="1.80" fill="#8c8c8c" />
<rect x="900.80" y="94.50" width="1.80" height="1.80" fill="#8c8c8c" />
<rect x="900.80" y="106.50" width="1.80" height="1.80" fill="#8c8c8c" />
<rect x="900.80" y="118.50" width="1.80" height="1.80" fill="#8c8c8c" />
<rect x="900.80" y="130.50" width="1.80" height="1.80" fill="#8c8c8c" />
<rect x="900.80" y="142.50" width="1.80" height="1.80" fill="#8c8c8c" />
<rect x="900.80" y="154.50" width="1.80" height="1.80" fill="#8c8c8c" />
<rect x="900.80" y="166.50" width="1.80" height="1.80" fill="#8c8c8c" />
<rect x="900.80" y="178.50" width="1.80" height="1.80" fill="#8c8c8c" />
<rect x="900.80" y="190.50" width="1.80" height="1.80" fill="#8c8c8c" />
<rect x="900.80" y="202.50" width="1.80" height="1.80" fill="#8c8c8c" />
<rect x="900.80" y="214.50" width="1.80" height="1.80" fill="#8c8c8c" />
<rect x="900.80" y="226.50" width="1.80" height="1.80" fill="#8c8c8c" />
<rect x="900.80" y="238.50" width="1.80" height="1.80" fill="#8c8c8c" />
<rect x="900.80" y="250.50" width="1.80" height="1.80" fill="#8c8c8c" />
<rect x="900.80" y="262.50" width="1.80" height="1.80" fill="#8c8c8c" />
<rect x="900.80" y="274.50" width="1.80" height="1.80" fill="#8c8c8c" />
<rect x="900.80" y="286.50" width="1.80" height="1.80" fill="#8c8c8c" />
<rect x="900.80" y="298.50" width="1.80" height="1.80" fill="#8c8c8c" />
<rect x="900.80" y="310.50" width="1.80" height="1.80" fill="#8c8c8c" />
<rect x="900.80" y="334.50" width="1.80" height="1.80" fill="#8c8c8c" />
<rect x="900.80" y="346.50" width="1.80" height="1.80" fill="#8c8c8c" />
<rect x="900.80" y="358.50" width="1.80" height="1.80" fill="#8c8c8c" />
<rect x="900.80" y="370.50" width="1.80" height="1.80" fill="#8c8c8c" />
<rect x="900.80" y="382.50" width="1.80" height="1.80" fill="#8c8c8c" />
<rect x="900.80" y="394.50" width="1.80" height="1.80" fill="#8c8c8c" />
<rect x="900.80" y="406.50" width="1.80" height="1.80" fill="#8c8c8c" />
<rect x="900.80" y="418.50" width="1.80" height="1.80" fill="#8c8c8c" />
<rect x="900.80" y="430.50" width="1.80" height="1.80" fill="#8c8c8c" />
<rect x="900.80" y="442.50" width="1.80" height="1.80" fill="#8c8c8c" />
<rect x="900.80" y="454.50" width="1.80" height="1.80" fill="#8c8c8c" />
<rect x="900.80" y="466.50" width="1.80" height="1.80" fill="#8c8c8c" />
<rect x="900.80" y="478.50" width="1.80" height="1.80" fill="#8c8c8c" />
<rect x="900.80" y="490.50" width="1.80" height="1.80" fill="#8c8c8c" />
<rect x="900.80" y="502.50" width="1.80" height="1.80" fill="#8c8c8c" />
<rect x="900.80" y="514.50" width="1.80" height="1.80" fill="#8c8c8c" />
<rect x="900.80" y="526.50" width="1.80" height="1.80" fill="#8c8c8c" />
<rect x="900.80" y="538.50" width="1.80" height="1.80" fill="#8c8c8c" />
<rect x="900.80" y="550.50" width="1.80" height="1.80" fill="#8c8c8c" />
<rect x="900.80" y="562.50" width="1.80" height="1.80" fill="#8c8c8c" />
<rect x="900.80" y="574.50" width="1.80" height="1.80" fill="#8c8c8c" />
<rect x="900.80" y="586.50" width="1.80" height="1.80" fill="#8c8c8c" />
<rect x="900.80" y="598.50" width="1.80" height="1.80" fill="#8c8c8c" />
<rect x="900.80" y="610.50" width="1.80" height="1.80" fill="#8c8c8c" />
<rect x="36.80" y="82.50" width="1.80" height="1.80" fill="#8c8c8c" />
<rect x="48.80" y="82.50" width="1.80" height="1.80" fill="#8c8c8c" />
<rect x="72.80" y="82.50" width="1.80" height="1.80" fill="#8c8c8c" />
<rect x="84.80" y="82.50" width="1.80" height="1.80" fill="#8c8c8c" />
<rect x="96.80" y="82.50" width="1.80" height="1.80" fill="#8c8c8c" />
<rect x="108.80" y="82.50" width="1.80" height="1.80" fill="#8c8c8c" />
<rect x="132.80" y="82.50" width="1.80" height="1.80" fill="#8c8c8c" />
<rect x="144.80" y="82.50" width="1.80" height="1.80" fill="#8c8c8c" />
<rect x="156.80" y="82.50" width="1.80" height="1.80" fill="#8c8c8c" />
<rect x="168.80" y="82.50" width="1.80" height="1.80" fill="#8c8c8c" />
<rect x="192.80" y="82.50" width="1.80" height="1.80" fill="#8c8c8c" />
<rect x="204.80" y="82.50" width="1.80" height="1.80" fill="#8c8c8c" />
<rect x="216.80" y="82.50" width="1.80" height="1.80" fill="#8c8c8c" />
<rect x="228.80" y="82.50" width="1.80" height="1.80" fill="#8c8c8c" />
<rect x="252.80" y="82.50" width="1.80" height="1.80" fill="#8c8c8c" />
<rect x="264.80" y="82.50" width="1.80" height="1.80" fill="#8c8c8c" />
<rect x="276.80" y="82.50" width="1.80" height="1.80" fill="#8c8c8c" />
<rect x="288.80" y="82.50" width="1.80" height="1.80" fill="#8c8c8c" />
<rect x="312.80" y="82.50" width="1.80" height="1.80" fill="#8c8c8c" />
<rect x="324.80" y="82.50" width="1.80" height="1.80" fill="#8c8c8c" />
<rect x="336.80" y="82.50" width="1.80" height="1.80" fill="#8c8c8c" />
<rect x="348.80" y="82.50" width="1.80" height="1.80" fill="#8c8c8c" />
<rect x="372.80" y="82.50" width="1.80" height="1.80" fill="#8c8c8c" />
<rect x="384.80" y="82.50" width="1.80" height="1.80" fill="#8c8c8c" />
<rect x="396.80" y="82.50" width="1.80" height="1.80" fill="#8c8c8c" />
<rect x="408.80" y="82.50" width="1.80" height="1.80" fill="#8c8c8c" />
<rect x="432.80" y="82.50" width="1.80" height="1.80" fill="#8c8c8c" />
<rect x="444.80" y="82.50" width="1.80" height="1.80" fill="#8c8c8c" />
<rect x="456.80" y="82.50" width="1.80" height="1.80" fill="#8c8c8c" />
<rect x="468.80" y="82.50" width="1.80" height="1.80" fill="#8c8c8c" />
<rect x="492.80" y="82.50" width="1.80" height="1.80" fill="#8c8c8c" />
<rect x="504.80" y="82.50" width="1.80" height="1.80" fill="#8c8c8c" />
<rect x="516.80" y="82.50" width="1.80" height="1.80" fill="#8c8c8c" />
<rect x="528.80" y="82.50" width="1.80" height="1.80" fill="#8c8c8c" />
<rect x="552.80" y="82.50" width="1.80" height="1.80" fill="#8c8c8c" />
<rect x="564.80" y="82.50" width="1.80" height="1.80" fill="#8c8c8c" />
<rect x="576.80" y="82.50" width="1.80" height="1.80" fill="#8c8c8c" />
<rect x="588.80" y="82.50" width="1.80" height="1.80" fill="#8c8c8c" />
<rect x="612.80" y="82.50" width="1.80" height="1.80" fill="#8c8c8c" />
<rect x="624.80" y="82.50" width="1.80" height="1.80" fill="#8c8c8c" />
<rect x="636.80" y="82.50" width="1.80" height="1.80" fill="#8c8c8c" />
<rect x="648.80" y="82.50" width="1.80" height="1.80" fill="#8c8c8c" />
<rect x="672.80" y="82.50" width="1.80" height="1.80" fill="#8c8c8c" />
<rect x="684.80" y="82.50" width="1.80" height="1.80" fill="#8c8c8c" />
<rect x="696.80" y="82.50" width="1.80" height="1.80" fill="#8c8c8c" />
<rect x="708.80" y="82.50" width="1.80" height="1.80" fill="#8c8c8c" />
<rect x="732.80" y="82.50" width="1.80" height="1.80" fill="#8c8c8c" />
<rect x="744.80" y="82.50" width="1.80" height="1.80" fill="#8c8c8c" />
<rect x="756.80" y="82.50" width="1.80" height="1.80" fill="#8c8c8c" />
<rect x="768.80" y="82.50" width="1.80" height="1.80" fill="#8c8c8c" />
<rect x="792.80" y="82.50" width="1.80" height="1.80" fill="#8c8c8c" />
<rect x="804.80" y="82.50" width="1.80" height="1.80" fill="#8c8c8c" />
<rect x="816.80" y="82.50" width="1.80" height="1.80" fill="#8c8c8c" />
<rect x="828.80" y="82.50" width="1.80" height="1.80" fill="#8c8c8c" />
<rect x="852.80" y="82.50" width="1.80" height="1.80" fill="#8c8c8c" />
<rect x="864.80" y="82.50" width="1.80" height="1.80" fill="#8c8c8c" />
<rect x="876.80" y="82.50" width="1.80" height="1.80" fill="#8c8c8c" />
<rect x="888.80" y="82.50" width="1.80" height="1.80" fill="#8c8c8c" />
<rect x="912.80" y="82.50" width="1.80" height="1.80" fill="#8c8c8c" />
<rect x="924.80" y="82.50" width="1.80" height="1.80" fill="#8c8c8c" />
<rect x="36.80" y="142.50" width="1.80" height="1.80" fill="#8c8c8c" />
<rect x="48.80" y="142.50" width="1.80" height="1.80" fill="#8c8c8c" />
<rect x="72.80" y="142.50" width="1.80" height="1.80" fill="#8c8c8c" />
<rect x="84.80" y="142.50" width="1.80" height="1.80" fill="#8c8c8c" />
<rect x="96.80" y="142.50" width="1.80" height="1.80" fill="#8c8c8c" />
<rect x="108.80" y="142.50" width="1.80" height="1.80" fill="#8c8c8c" />
<rect x="132.80" y="142.50" width="1.80" height="1.80" fill="#8c8c8c" />
<rect x="144.80" y="142.50" width="1.80" height="1.80" fill="#8c8c8c" />
<rect x="156.80" y="142.50" width="1.80" height="1.80" fill="#8c8c8c" />
<rect x="168.80" y="142.50" width="1.80" height="1.80" fill="#8c8c8c" />
<rect x="192.80" y="142.50" width="1.80" height="1.80" fill="#8c8c8c" />
<rect x="204.80" y="142.50" width="1.80" height="1.80" fill="#8c8c8c" />
<rect x="216.80" y="142.50" width="1.80" height="1.80" fill="#8c8c8c" />
<rect x="228.80" y="142.50" width="1.80" height="1.80" fill="#8c8c8c" />
<rect x="252.80" y="142.50" width="1.80" height="1.80" fill="#8c8c8c" />
<rect x="264.80" y="142.50" width="1.80" height="1.80" fill="#8c8c8c" />
<rect x="276.80" y="142.50" width="1.80" height="1.80" fill="#8c8c8c" />
<rect x="288.80" y="142.50" width="1.80" height="1.80" fill="#8c8c8c" />
<rect x="312.80" y="142.50" width="1.80" height="1.80" fill="#8c8c8c" />
<rect x="324.80" y="142.50" width="1.80" height="1.80" fill="#8c8c8c" />
<rect x="336.80" y="142.50" width="1.80" height="1.80" fill="#8c8c8c" />
<rect x="348.80" y="142.50" width="1.80" height="1.80" fill="#8c8c8c" />
<rect x="372.80" y="142.50" width="1.80" height="1.80" fill="#8c8c8c" />
<rect x="384.80" y="142.50" width="1.80" height="1.80" fill="#8c8c8c" />
<rect x="396.80" y="142.50" width="1.80" height="1.80" fill="#8c8c8c" />
<rect x="408.80" y="142.50" width="1.80" height="1.80" fill="#8c8c8c" />
<rect x="432.80" y="142.50" width="1.80" height="1.80" fill="#8c8c8c" />
<rect x="444.80" y="142.50" width="1.80" height="1.80" fill="#8c8c8c" />
<rect x="456.80" y="142.50" width="1.80" height="1.80" fill="#8c8c8c" />
<rect x="468.80" y="142.50" width="1.80" height="1.80" fill="#8c8c8c" />
<rect x="492.80" y="142.50" width="1.80" height="1.80" fill="#8c8c8c" />
<rect x="504.80" y="142.50" width="1.80" height="1.80" fill="#8c8c8c" />
<rect x="516.80" y="142.50" width="1.80" height="1.80" fill="#8c8c8c" />
<rect x="528.80" y="142.50" width="1.80" height="1.80" fill="#8c8c8c" />
<rect x="552.80" y="142.50" width="1.80" height="1.80" fill="#8c8c8c" />
<rect x="564.80" y="142.50" width="1.80" height="1.80" fill="#8c8c8c" />
<rect x="576.80" y="142.50" width="1.80" height="1.80" fill="#8c8c8c" />
<rect x="588.80" y="142.50" width="1.80" height="1.80" fill="#8c8c8c" />
<rect x="612.80" y="142.50" width="1.80" height="1.80" fill="#8c8c8c" />
<rect x="624.80" y="142.50" width="1.80" height="1.80" fill="#8c8c8c" />
<rect x="636.80" y="142.50" width="1.80" height="1.80" fill="#8c8c8c" />
<rect x="648.80" y="142.50" width="1.80" height="1.80" fill="#8c8c8c" />
<rect x="672.80" y="142.50" width="1.80" height="1.80" fill="#8c8c8c" />
<rect x="684.80" y="142.50" width="1.80" height="1.80" fill="#8c8c8c" />
<rect x="696.80" y="142.50" width="1.80" height="1.80" fill="#8c8c8c" />
<rect x="708.80" y="142.50" width="1.80" height="1.80" fill="#8c8c8c" />
<rect x="732.80" y="142.50" width="1.80" height="1.80" fill="#8c8c8c" />
<rect x="744.80" y="142.50" width="1.80" height="1.80" fill="#8c8c8c" />
<rect x="756.80" y="142.50" width="1.80" height="1.80" fill="#8c8c8c" />
<rect x="768.80" y="142.50" width="1.80" height="1.80" fill="#8c8c8c" />
<rect x="792.80" y="142.50" width="1.80" height="1.80" fill="#8c8c8c" />
<rect x="804.80" y="142.50" width="1.80" height="1.80" fill="#8c8c8c" />
<rect x="816.80" y="142.50" width="1.80" height="1.80" fill="#8c8c8c" />
<rect x="828.80" y="142.50" width="1.80" height="1.80" fill="#8c8c8c" />
<rect x="852.80" y="142.50" width="1.80" height="1.80" fill="#8c8c8c" />
<rect x="864.80" y="142.50" width="1.80" height="1.80" fill="#8c8c8c" />
<rect x="876.80" y="142.50" width="1.80" height="1.80" fill="#8c8c8c" />
<rect x="888.80" y="142.50" width="1.80" height="1.80" fill="#8c8c8c" />
<rect x="912.80" y="142.50" width="1.80" height="1.80" fill="#8c8c8c" />
<rect x="924.80" y="142.50" width="1.80" height="1.80" fill="#8c8c8c" />
<rect x="36.80" y="202.50" width="1.80" height="1.80" fill="#8c8c8c" />
<rect x="48.80" y="202.50" width="1.80" height="1.80" fill="#8c8c8c" />
<rect x="72.80" y="202.50" width="1.80" height="1.80" fill="#8c8c8c" />
<rect x="84.80" y="202.50" width="1.80" height="1.80" fill="#8c8c8c" />
<rect x="96.80" y="202.50" width="1.80" height="1.80" fill="#8c8c8c" />
<rect x="108.80" y="202.50" width="1.80" height="1.80" fill="#8c8c8c" />
<rect x="132.80" y="202.50" width="1.80" height="1.80" fill="#8c8c8c" />
<rect x="144.80" y="202.50" width="1.80" height="1.80" fill="#8c8c8c" />
<rect x="156.80" y="202.50" width="1.80" height="1.80" fill="#8c8c8c" />
<rect x="168.80" y="202.50" width="1.80" height="1.80" fill="#8c8c8c" />
<rect x="192.80" y="202.50" width="1.80" height="1.80" fill="#8c8c8c" />
<rect x="204.80" y="202.50" width="1.80" height="1.80" fill="#8c8c8c" />
<rect x="216.80" y="202.50" width="1.80" height="1.80" fill="#8c8c8c" />
<rect x="228.80" y="202.50" width="1.80" height="1.80" fill="#8c8c8c" />
<rect x="252.80" y="202.50" width="1.80" height="1.80" fill="#8c8c8c" />
<rect x="264.80" y="202.50" width="1.80" height="1.80" fill="#8c8c8c" />
<rect x="276.80" y="202.50" width="1.80" height="1.80" fill="#8c8c8c" />
<rect x="288.80" y="202.50" width="1.80" height="1.80" fill="#8c8c8c" />
<rect x="312.80" y="202.50" width="1.80" height="1.80" fill="#8c8c8c" />
<rect x="324.80" y="202.50" width="1.80" height="1.80" fill="#8c8c8c" />
<rect x="336.80" y="202.50" width="1.80" height="1.80" fill="#8c8c8c" />
<rect x="348.80" y="202.50" width="1.80" height="1.80" fill="#8c8c8c" />
<rect x="372.80" y="202.50" width="1.80" height="1.80" fill="#8c8c8c" />
<rect x="384.80" y="202.50" width="1.80" height="1.80" fill="#8c8c8c" />
<rect x="396.80" y="202.50" width="1.80" height="1.80" fill="#8c8c8c" />
<rect x="408.80" y="202.50" width="1.80" height="1.80" fill="#8c8c8c" />
<rect x="432.80" y="202.50" width="1.80" height="1.80" fill="#8c8c8c" />
<rect x="444.80" y="202.50" width="1.80" height="1.80" fill="#8c8c8c" />
<rect x="456.80" y="202.50" width="1.80" height="1.80" fill="#8c8c8c" />
<rect x="468.80" y="202.50" width="1.80" height="1.80" fill="#8c8c8c" />
<rect x="492.80" y="202.50" width="1.80" height="1.80" fill="#8c8c8c" />
<rect x="504.80" y="202.50" width="1.80" height="1.80" fill="#8c8c8c" />
<rect x="516.80" y="202.50" width="1.80" height="1.80" fill="#8c8c8c" />
<rect x="528.80" y="202.50" width="1.80" height="1.80" fill="#8c8c8c" />
<rect x="552.80" y="202.50" width="1.80" height="1.80" fill="#8c8c8c" />
<rect x="564.80" y="202.50" width="1.80" height="1.80" fill="#8c8c8c" />
<rect x="576.80" y="202.50" width="1.80" height="1.80" fill="#8c8c8c" />
<rect x="588.80" y="202.50" width="1.80" height="1.80" fill="#8c8c8c" />
<rect x="612.80" y="202.50" width="1.80" height="1.80" fill="#8c8c8c" />
<rect x="624.80" y="202.50" width="1.80" height="1.80" fill="#8c8c8c" />
<rect x="636.80" y="202.50" width="1.80" height="1.80" fill="#8c8c8c" />
<rect x="648.80" y="202.50" width="1.80" height="1.80" fill="#8c8c8c" />
<rect x="672.80" y="202.50" width="1.80" height="1.80" fill="#8c8c8c" />
<rect x="684.80" y="202.50" width="1.80" height="1.80" fill="#8c8c8c" />
<rect x="696.80" y="202.50" width="1.80" height="1.80" fill="#8c8c8c" />
<rect x="708.80" y="202.50" width="1.80" height="1.80" fill="#8c8c8c" />
<rect x="732.80" y="202.50" width="1.80" height="1.80" fill="#8c8c8c" />
<rect x="744.80" y="202.50" width="1.80" height="1.80" fill="#8c8c8c" />
<rect x="756.80" y="202.50" width="1.80" height="1.80" fill="#8c8c8c" />
<rect x="768.80" y="202.50" width="1.80" height="1.80" fill="#8c8c8c" />
<rect x="792.80" y="202.50" width="1.80" height="1.80" fill="#8c8c8c" />
<rect x="804.80" y="202.50" width="1.80" height="1.80" fill="#8c8c8c" />
<rect x="816.80" y="202.50" width="1.80" height="1.80" fill="#8c8c8c" />
<rect x="828.80" y="202.50" width="1.80" height="1.80" fill="#8c8c8c" />
<rect x="852.80" y="202.50" width="1.80" height="1.80" fill="#8c8c8c" />
<rect x="864.80" y="202.50" width="1.80" height="1.80" fill="#8c8c8c" />
<rect x="876.80" y="202.50" width="1.80" height="1.80" fill="#8c8c8c" />
<rect x="888.80" y="202.50" width="1.80" height="1.80" fill="#8c8c8c" />
<rect x="912.80" y="202.50" width="1.80" height="1.80" fill="#8c8c8c" />
<rect x="924.80" y="202.50" width="1.80" height="1.80" fill="#8c8c8c" />
<rect x="36.80" y="262.50" width="1.80" height="1.80" fill="#8c8c8c" />
<rect x="48.80" y="262.50" width="1.80" height="1.80" fill="#8c8c8c" />
<rect x="72.80" y="262.50" width="1.80" height="1.80" fill="#8c8c8c" />
<rect x="84.80" y="262.50" width="1.80" height="1.80" fill="#8c8c8c" />
<rect x="96.80" y="262.50" width="1.80" height="1.80" fill="#8c8c8c" />
<rect x="108.80" y="262.50" width="1.80" height="1.80" fill="#8c8c8c" />
<rect x="132.80" y="262.50" width="1.80" height="1.80" fill="#8c8c8c" />
<rect x="144.80" y="262.50" width="1.80" height="1.80" fill="#8c8c8c" />
<rect x="156.80" y="262.50" width="1.80" height="1.80" fill="#8c8c8c" />
<rect x="168.80" y="262.50" width="1.80" height="1.80" fill="#8c8c8c" />
<rect x="192.80" y="262.50" width="1.80" height="1.80" fill="#8c8c8c" />
<rect x="204.80" y="262.50" width="1.80" height="1.80" fill="#8c8c8c" />
<rect x="216.80" y="262.50" width="1.80" height="1.80" fill="#8c8c8c" />
<rect x="228.80" y="262.50" width="1.80" height="1.80" fill="#8c8c8c" />
<rect x="252.80" y="262.50" width="1.80" height="1.80" fill="#8c8c8c" />
<rect x="264.80" y="262.50" width="1.80" height="1.80" fill="#8c8c8c" />
<rect x="276.80" y="262.50" width="1.80" height="1.80" fill="#8c8c8c" />
<rect x="288.80" y="262.50" width="1.80" height="1.80" fill="#8c8c8c" />
<rect x="312.80" y="262.50" width="1.80" height="1.80" fill="#8c8c8c" />
<rect x="324.80" y="262.50" width="1.80" height="1.80" fill="#8c8c8c" />
<rect x="336.80" y="262.50" width="1.80" height="1.80" fill="#8c8c8c" />
<rect x="348.80" y="262.50" width="1.80" height="1.80" fill="#8c8c8c" />
<rect x="372.80" y="262.50" width="1.80" height="1.80" fill="#8c8c8c" />
<rect x="384.80" y="262.50" width="1.80" height="1.80" fill="#8c8c8c" />
<rect x="396.80" y="262.50" width="1.80" height="1.80" fill="#8c8c8c" />
<rect x="408.80" y="262.50" width="1.80" height="1.80" fill="#8c8c8c" />
<rect x="432.80" y="262.50" width="1.80" height="1.80" fill="#8c8c8c" />
<rect x="444.80" y="262.50" width="1.80" height="1.80" fill="#8c8c8c" />
<rect x="456.80" y="262.50" width="1.80" height="1.80" fill="#8c8c8c" />
<rect x="468.80" y="262.50" width="1.80" height="1.80" fill="#8c8c8c" />
<rect x="492.80" y="262.50" width="1.80" height="1.80" fill="#8c8c8c" />
<rect x="504.80" y="262.50" width="1.80" height="1.80" fill="#8c8c8c" />
<rect x="516.80" y="262.50" width="1.80" height="1.80" fill="#8c8c8c" />
<rect x="528.80" y="262.50" width="1.80" height="1.80" fill="#8c8c8c" />
<rect x="552.80" y="262.50" width="1.80" height="1.80" fill="#8c8c8c" />
<rect x="564.80" y="262.50" width="1.80" height="1.80" fill="#8c8c8c" />
<rect x="576.80" y="262.50" width="1.80" height="1.80" fill="#8c8c8c" />
<rect x="588.80" y="262.50" width="1.80" height="1.80" fill="#8c8c8c" />
<rect x="612.80" y="262.50" width="1.80" height="1.80" fill="#8c8c8c" />
<rect x="624.80" y="262.50" width="1.80" height="1.80" fill="#8c8c8c" />
<rect x="636.80" y="262.50" width="1.80" height="1.80" fill="#8c8c8c" />
<rect x="648.80" y="262.50" width="1.80" height="1.80" fill="#8c8c8c" />
<rect x="672.80" y="262.50" width="1.80" height="1.80" fill="#8c8c8c" />
<rect x="684.80" y="262.50" width="1.80" height="1.80" fill="#8c8c8c" />
<rect x="696.80" y="262.50" width="1.80" height="1.80" fill="#8c8c8c" />
<rect x="708.80" y="262.50" width="1.80" height="1.80" fill="#8c8c8c" />
<rect x="732.80" y="262.50" width="1.80" height="1.80" fill="#8c8c8c" />
<rect x="744.80" y="262.50" width="1.80" height="1.80" fill="#8c8c8c" />
<rect x="756.80" y="262.50" width="1.80" height="1.80" fill="#8c8c8c" />
<rect x="768.80" y="262.50" width="1.80" height="1.80" fill="#8c8c8c" />
<rect x="792.80" y="262.50" width="1.80" height="1.80" fill="#8c8c8c" />
<rect x="804.80" y="262.50" width="1.80" height="1.80" fill="#8c8c8c" />
<rect x="816.80" y="262.50" width="1.80" height="1.80" fill="#8c8c8c" />
<rect x="828.80" y="262.50" width="1.80" height="1.80" fill="#8c8c8c" />
<rect x="852.80" y="262.50" width="1.80" height="1.80" fill="#8c8c8c" />
<rect x="864.80" y="262.50" width="1.80" height="1.80" fill="#8c8c8c" />
<rect x="876.80" y="262.50" width="1.80" height="1.80" fill="#8c8c8c" />
<rect x="888.80" y="262.50" width="1.80" height="1.80" fill="#8c8c8c" />
<rect x="912.80" y="262.50" width="1.80" height="1.80" fill="#8c8c8c" />
<rect x="924.80" y="262.50" width="1.80" height="1.80" fill="#8c8c8c" />
<rect x="36.80" y="382.50" width="1.80" height="1.80" fill="#8c8c8c" />
<rect x="48.80" y="382.50" width="1.80" height="1.80" fill="#8c8c8c" />
<rect x="72.80" y="382.50" width="1.80" height="1.80" fill="#8c8c8c" />
<rect x="84.80" y="382.50" width="1.80" height="1.80" fill="#8c8c8c" />
<rect x="96.80" y="382.50" width="1.80" height="1.80" fill="#8c8c8c" />
<rect x="108.80" y="382.50" width="1.80" height="1.80" fill="#8c8c8c" />
<rect x="132.80" y="382.50" width="1.80" height="1.80" fill="#8c8c8c" />
<rect x="144.80" y="382.50" width="1.80" height="1.80" fill="#8c8c8c" />
<rect x="156.80" y="382.50" width="1.80" height="1.80" fill="#8c8c8c" />
<rect x="168.80" y="382.50" width="1.80" height="1.80" fill="#8c8c8c" />
<rect x="192.80" y="382.50" width="1.80" height="1.80" fill="#8c8c8c" />
<rect x="204.80" y="382.50" width="1.80" height="1.80" fill="#8c8c8c" />
<rect x="216.80" y="382.50" width="1.80" height="1.80" fill="#8c8c8c" />
<rect x="228.80" y="382.50" width="1.80" height="1.80" fill="#8c8c8c" />
<rect x="252.80" y="382.50" width="1.80" height="1.80" fill="#8c8c8c" />
<rect x="264.80" y="382.50" width="1.80" height="1.80" fill="#8c8c8c" />
<rect x="276.80" y="382.50" width="1.80" height="1.80" fill="#8c8c8c" />
<rect x="288.80" y="382.50" width="1.80" height="1.80" fill="#8c8c8c" />
<rect x="312.80" y="382.50" width="1.80" height="1.80" fill="#8c8c8c" />
<rect x="324.80" y="382.50" width="1.80" height="1.80" fill="#8c8c8c" />
<rect x="336.80" y="382.50" width="1.80" height="1.80" fill="#8c8c8c" />
<rect x="348.80" y="382.50" width="1.80" height="1.80" fill="#8c8c8c" />
<rect x="372.80" y="382.50" width="1.80" height="1.80" fill="#8c8c8c" />
<rect x="384.80" y="382.50" width="1.80" height="1.80" fill="#8c8c8c" />
<rect x="396.80" y="382.50" width="1.80" height="1.80" fill="#8c8c8c" />
<rect x="408.80" y="382.50" width="1.80" height="1.80" fill="#8c8c8c" />
<rect x="432.80" y="382.50" width="1.80" height="1.80" fill="#8c8c8c" />
<rect x="444.80" y="382.50" width="1.80" height="1.80" fill="#8c8c8c" />
<rect x="456.80" y="382.50" width="1.80" height="1.80" fill="#8c8c8c" />
<rect x="468.80" y="382.50" width="1.80" height="1.80" fill="#8c8c8c" />
<rect x="492.80" y="382.50" width="1.80" height="1.80" fill="#8c8c8c" />
<rect x="504.80" y="382.50" width="1.80" height="1.80" fill="#8c8c8c" />
<rect x="516.80" y="382.50" width="1.80" height="1.80" fill="#8c8c8c" />
<rect x="528.80" y="382.50" width="1.80" height="1.80" fill="#8c8c8c" />
<rect x="552.80" y="382.50" width="1.80" height="1.80" fill="#8c8c8c" />
<rect x="564.80" y="382.50" width="1.80" height="1.80" fill="#8c8c8c" />
<rect x="576.80" y="382.50" width="1.80" height="1.80" fill="#8c8c8c" />
<rect x="588.80" y="382.50" width="1.80" height="1.80" fill="#8c8c8c" />
<rect x="612.80" y="382.50" width="1.80" height="1.80" fill="#8c8c8c" />
<rect x="624.80" y="382.50" width="1.80" height="1.80" fill="#8c8c8c" />
<rect x="636.80" y="382.50" width="1.80" height="1.80" fill="#8c8c8c" />
<rect x="648.80" y="382.50" width="1.80" height="1.80" fill="#8c8c8c" />
<rect x="672.80" y="382.50" width="1.80" height="1.80" fill="#8c8c8c" />
<rect x="684.80" y="382.50" width="1.80" height="1.80" fill="#8c8c8c" />
<rect x="696.80" y="382.50" width="1.80" height="1.80" fill="#8c8c8c" />
<rect x="708.80" y="382.50" width="1.80" height="1.80" fill="#8c8c8c" />
<rect x="732.80" y="382.50" width="1.80" height="1.80" fill="#8c8c8c" />
<rect x="744.80" y="382.50" width="1.80" height="1.80" fill="#8c8c8c" />
<rect x="756.80" y="382.50" width="1.80" height="1.80" fill="#8c8c8c" />
<rect x="768.80" y="382.50" width="1.80" height="1.80" fill="#8c8c8c" />
<rect x="792.80" y="382.50" width="1.80" height="1.80" fill="#8c8c8c" />
<rect x="804.80" y="382.50" width="1.80" height="1.80" fill="#8c8c8c" />
<rect x="816.80" y="382.50" width="1.80" height="1.80" fill="#8c8c8c" />
<rect x="828.80" y="382.50" width="1.80" height="1.80" fill="#8c8c8c" />
<rect x="852.80" y="382.50" width="1.80" height="1.80" fill="#8c8c8c" />
<rect x="864.80" y="382.50" width="1.80" height="1.80" fill="#8c8c8c" />
<rect x="876.80" y="382.50" width="1.80" height="1.80" fill="#8c8c8c" />
<rect x="888.80" y="382.50" width="1.80" height="1.80" fill="#8c8c8c" />
<rect x="912.80" y="382.50" width="1.80" height="1.80" fill="#8c8c8c" />
<rect x="924.80" y="382.50" width="1.80" height="1.80" fill="#8c8c8c" />
<rect x="36.80" y="442.50" width="1.80" height="1.80" fill="#8c8c8c" />
<rect x="48.80" y="442.50" width="1.80" height="1.80" fill="#8c8c8c" />
<rect x="72.80" y="442.50" width="1.80" height="1.80" fill="#8c8c8c" />
<rect x="84.80" y="442.50" width="1.80" height="1.80" fill="#8c8c8c" />
<rect x="96.80" y="442.50" width="1.80" height="1.80" fill="#8c8c8c" />
<rect x="108.80" y="442.50" width="1.80" height="1.80" fill="#8c8c8c" />
<rect x="132.80" y="442.50" width="1.80" height="1.80" fill="#8c8c8c" />
<rect x="144.80" y="442.50" width="1.80" height="1.80" fill="#8c8c8c" />
<rect x="156.80" y="442.50" width="1.80" height="1.80" fill="#8c8c8c" />
<rect x="168.80" y="442.50" width="1.80" height="1.80" fill="#8c8c8c" />
<rect x="192.80" y="442.50" width="1.80" height="1.80" fill="#8c8c8c" />
<rect x="204.80" y="442.50" width="1.80" height="1.80" fill="#8c8c8c" />
<rect x="216.80" y="442.50" width="1.80" height="1.80" fill="#8c8c8c" />
<rect x="228.80" y="442.50" width="1.80" height="1.80" fill="#8c8c8c" />
<rect x="252.80" y="442.50" width="1.80" height="1.80" fill="#8c8c8c" />
<rect x="264.80" y="442.50" width="1.80" height="1.80" fill="#8c8c8c" />
<rect x="276.80" y="442.50" width="1.80" height="1.80" fill="#8c8c8c" />
<rect x="288.80" y="442.50" width="1.80" height="1.80" fill="#8c8c8c" />
<rect x="312.80" y="442.50" width="1.80" height="1.80" fill="#8c8c8c" />
<rect x="324.80" y="442.50" width="1.80" height="1.80" fill="#8c8c8c" />
<rect x="336.80" y="442.50" width="1.80" height="1.80" fill="#8c8c8c" />
<rect x="348.80" y="442.50" width="1.80" height="1.80" fill="#8c8c8c" />
<rect x="372.80" y="442.50" width="1.80" height="1.80" fill="#8c8c8c" />
<rect x="384.80" y="442.50" width="1.80" height="1.80" fill="#8c8c8c" />
<rect x="396.80" y="442.50" width="1.80" height="1.80" fill="#8c8c8c" />
<rect x="408.80" y="442.50" width="1.80" height="1.80" fill="#8c8c8c" />
<rect x="432.80" y="442.50" width="1.80" height="1.80" fill="#8c8c8c" />
<rect x="444.80" y="442.50" width="1.80" height="1.80" fill="#8c8c8c" />
<rect x="456.80" y="442.50" width="1.80" height="1.80" fill="#8c8c8c" />
<rect x="468.80" y="442.50" width="1.80" height="1.80" fill="#8c8c8c" />
<rect x="492.80" y="442.50" width="1.80" height="1.80" fill="#8c8c8c" />
<rect x="504.80" y="442.50" width="1.80" height="1.80" fill="#8c8c8c" />
<rect x="516.80" y="442.50" width="1.80" height="1.80" fill="#8c8c8c" />
<rect x="528.80" y="442.50" width="1.80" height="1.80" fill="#8c8c8c" />
<rect x="552.80" y="442.50" width="1.80" height="1.80" fill="#8c8c8c" />
<rect x="564.80" y="442.50" width="1.80" height="1.80" fill="#8c8c8c" />
<rect x="576.80" y="442.50" width="1.80" height="1.80" fill="#8c8c8c" />
<rect x="588.80" y="442.50" width="1.80" height="1.80" fill="#8c8c8c" />
<rect x="612.80" y="442.50" width="1.80" height="1.80" fill="#8c8c8c" />
<rect x="624.80" y="442.50" width="1.80" height="1.80" fill="#8c8c8c" />
<rect x="636.80" y="442.50" width="1.80" height="1.80" fill="#8c8c8c" />
<rect x="648.80" y="442.50" width="1.80" height="1.80" fill="#8c8c8c" />
<rect x="672.80" y="442.50" width="1.80" height="1.80" fill="#8c8c8c" />
<rect x="684.80" y="442.50" width="1.80" height="1.80" fill="#8c8c8c" />
<rect x="696.80" y="442.50" width="1.80" height="1.80" fill="#8c8c8c" />
<rect x="708.80" y="442.50" width="1.80" height="1.80" fill="#8c8c8c" />
<rect x="732.80" y="442.50" width="1.80" height="1.80" fill="#8c8c8c" />
<rect x="744.80" y="442.50" width="1.80" height="1.80" fill="#8c8c8c" />
<rect x="756.80" y="442.50" width="1.80" height="1.80" fill="#8c8c8c" />
<rect x="768.80" y="442.50" width="1.80" height="1.80" fill="#8c8c8c" />
<rect x="792.80" y="442.50" width="1.80" height="1.80" fill="#8c8c8c" />
<rect x="804.80" y="442.50" width="1.80" height="1.80" fill="#8c8c8c" />
<rect x="816.80" y="442.50" width="1.80" height="1.80" fill="#8c8c8c" />
<rect x="828.80" y="442.50" width="1.80" height="1.80" fill="#8c8c8c" />
<rect x="852.80" y="442.50" width="1.80" height="1.80" fill="#8c8c8c" />
<rect x="864.80" y="442.50" width="1.80" height="1.80" fill="#8c8c8c" />
<rect x="876.80" y="442.50" width="1.80" height="1.80" fill="#8c8c8c" />
<rect x="888.80" y="442.50" width="1.80" height="1.80" fill="#8c8c8c" />
<rect x="912.80" y="442.50" width="1.80" height="1.80" fill="#8c8c8c" />
<rect x="924.80" y="442.50" width="1.80" height="1.80" fill="#8c8c8c" />
<rect x="36.80" y="502.50" width="1.80" height="1.80" fill="#8c8c8c" />
<rect x="48.80" y="502.50" width="1.80" height="1.80" fill="#8c8c8c" />
<rect x="72.80" y="502.50" width="1.80" height="1.80" fill="#8c8c8c" />
<rect x="84.80" y="502.50" width="1.80" height="1.80" fill="#8c8c8c" />
<rect x="96.80" y="502.50" width="1.80" height="1.80" fill="#8c8c8c" />
<rect x="108.80" y="502.50" width="1.80" height="1.80" fill="#8c8c8c" />
<rect x="132.80" y="502.50" width="1.80" height="1.80" fill="#8c8c8c" />
<rect x="144.80" y="502.50" width="1.80" height="1.80" fill="#8c8c8c" />
<rect x="156.80" y="502.50" width="1.80" height="1.80" fill="#8c8c8c" />
<rect x="168.80" y="502.50" width="1.80" height="1.80" fill="#8c8c8c" />
<rect x="192.80" y="502.50" width="1.80" height="1.80" fill="#8c8c8c" />
<rect x="204.80" y="502.50" width="1.80" height="1.80" fill="#8c8c8c" />
<rect x="216.80" y="502.50" width="1.80" height="1.80" fill="#8c8c8c" />
<rect x="228.80" y="502.50" width="1.80" height="1.80" fill="#8c8c8c" />
<rect x="252.80" y="502.50" width="1.80" height="1.80" fill="#8c8c8c" />
<rect x="264.80" y="502.50" width="1.80" height="1.80" fill="#8c8c8c" />
<rect x="276.80" y="502.50" width="1.80" height="1.80" fill="#8c8c8c" />
<rect x="288.80" y="502.50" width="1.80" height="1.80" fill="#8c8c8c" />
<rect x="312.80" y="502.50" width="1.80" height="1.80" fill="#8c8c8c" />
<rect x="324.80" y="502.50" width="1.80" height="1.80" fill="#8c8c8c" />
<rect x="336.80" y="502.50" width="1.80" height="1.80" fill="#8c8c8c" />
<rect x="348.80" y="502.50" width="1.80" height="1.80" fill="#8c8c8c" />
<rect x="372.80" y="502.50" width="1.80" height="1.80" fill="#8c8c8c" />
<rect x="384.80" y="502.50" width="1.80" height="1.80" fill="#8c8c8c" />
<rect x="396.80" y="502.50" width="1.80" height="1.80" fill="#8c8c8c" />
<rect x="408.80" y="502.50" width="1.80" height="1.80" fill="#8c8c8c" />
<rect x="432.80" y="502.50" width="1.80" height="1.80" fill="#8c8c8c" />
<rect x="444.80" y="502.50" width="1.80" height="1.80" fill="#8c8c8c" />
<rect x="456.80" y="502.50" width="1.80" height="1.80" fill="#8c8c8c" />
<rect x="468.80" y="502.50" width="1.80" height="1.80" fill="#8c8c8c" />
<rect x="492.80" y="502.50" width="1.80" height="1.80" fill="#8c8c8c" />
<rect x="504.80" y="502.50" width="1.80" height="1.80" fill="#8c8c8c" />
<rect x="516.80" y="502.50" width="1.80" height="1.80" fill="#8c8c8c" />
<rect x="528.80" y="502.50" width="1.80" height="1.80" fill="#8c8c8c" />
<rect x="552.80" y="502.50" width="1.80" height="1.80" fill="#8c8c8c" />
<rect x="564.80" y="502.50" width="1.80" height="1.80" fill="#8c8c8c" />
<rect x="576.80" y="502.50" width="1.80" height="1.80" fill="#8c8c8c" />
<rect x="588.80" y="502.50" width="1.80" height="1.80" fill="#8c8c8c" />
<rect x="612.80" y="502.50" width="1.80" height="1.80" fill="#8c8c8c" />
<rect x="624.80" y="502.50" width="1.80" height="1.80" fill="#8c8c8c" />
<rect x="636.80" y="502.50" width="1.80" height="1.80" fill="#8c8c8c" />
<rect x="648.80" y="502.50" width="1.80" height="1.80" fill="#8c8c8c" />
<rect x="672.80" y="502.50" width="1.80" height="1.80" fill="#8c8c8c" />
<rect x="684.80" y="502.50" width="1.80" height="1.80" fill="#8c8c8c" />
<rect x="696.80" y="502.50" width="1.80" height="1.80" fill="#8c8c8c" />
<rect x="708.80" y="502.50" width="1.80" height="1.80" fill="#8c8c8c" />
<rect x="732.80" y="502.50" width="1.80" height="1.80" fill="#8c8c8c" />
<rect x="744.80" y="502.50" width="1.80" height="1.80" fill="#8c8c8c" />
<rect x="756.80" y="502.50" width="1.80" height="1.80" fill="#8c8c8c" />
<rect x="768.80" y="502.50" width="1.80" height="1.80" fill="#8c8c8c" />
<rect x="792.80" y="502.50" width="1.80" height="1.80" fill="#8c8c8c" />
<rect x="804.80" y="502.50" width="1.80" height="1.80" fill="#8c8c8c" />
<rect x="816.80" y="502.50" width="1.80" height="1.80" fill="#8c8c8c" />
<rect x="828.80" y="502.50" width="1.80" height="1.80" fill="#8c8c8c" />
<rect x="852.80" y="502.50" width="1.80" height="1.80" fill="#8c8c8c" />
<rect x="864.80" y="502.50" width="1.80" height="1.80" fill="#8c8c8c" />
<rect x="876.80" y="502.50" width="1.80" height="1.80" fill="#8c8c8c" />
<rect x="888.80" y="502.50" width="1.80" height="1.80" fill="#8c8c8c" />
<rect x="912.80" y="502.50" width="1.80" height="1.80" fill="#8c8c8c" />
<rect x="924.80" y="502.50" width="1.80" height="1.80" fill="#8c8c8c" />
<rect x="36.80" y="562.50" width="1.80" height="1.80" fill="#8c8c8c" />
<rect x="48.80" y="562.50" width="1.80" height="1.80" fill="#8c8c8c" />
<rect x="72.80" y="562.50" width="1.80" height="1.80" fill="#8c8c8c" />
<rect x="84.80" y="562.50" width="1.80" height="1.80" fill="#8c8c8c" />
<rect x="96.80" y="562.50" width="1.80" height="1.80" fill="#8c8c8c" />
<rect x="108.80" y="562.50" width="1.80" height="1.80" fill="#8c8c8c" />
<rect x="132.80" y="562.50" width="1.80" height="1.80" fill="#8c8c8c" />
<rect x="144.80" y="562.50" width="1.80" height="1.80" fill="#8c8c8c" />
<rect x="156.80" y="562.50" width="1.80" height="1.80" fill="#8c8c8c" />
<rect x="168.80" y="562.50" width="1.80" height="1.80" fill="#8c8c8c" />
<rect x="192.80" y="562.50" width="1.80" height="1.80" fill="#8c8c8c" />
<rect x="204.80" y="562.50" width="1.80" height="1.80" fill="#8c8c8c" />
<rect x="216.80" y="562.50" width="1.80" height="1.80" fill="#8c8c8c" />
<rect x="228.80" y="562.50" width="1.80" height="1.80" fill="#8c8c8c" />
<rect x="252.80" y="562.50" width="1.80" height="1.80" fill="#8c8c8c" />
<rect x="264.80" y="562.50" width="1.80" height="1.80" fill="#8c8c8c" />
<rect x="276.80" y="562.50" width="1.80" height="1.80" fill="#8c8c8c" />
<rect x="288.80" y="562.50" width="1.80" height="1.80" fill="#8c8c8c" />
<rect x="312.80" y="562.50" width="1.80" height="1.80" fill="#8c8c8c" />
<rect x="324.80" y="562.50" width="1.80" height="1.80" fill="#8c8c8c" />
<rect x="336.80" y="562.50" width="1.80" height="1.80" fill="#8c8c8c" />
<rect x="348.80" y="562.50" width="1.80" height="1.80" fill="#8c8c8c" />
<rect x="372.80" y="562.50" width="1.80" height="1.80" fill="#8c8c8c" />
<rect x="384.80" y="562.50" width="1.80" height="1.80" fill="#8c8c8c" />
<rect x="396.80" y="562.50" width="1.80" height="1.80" fill="#8c8c8c" />
<rect x="408.80" y="562.50" width="1.80" height="1.80" fill="#8c8c8c" />
<rect x="432.80" y="562.50" width="1.80" height="1.80" fill="#8c8c8c" />
<rect x="444.80" y="562.50" width="1.80" height="1.80" fill="#8c8c8c" />
<rect x="456.80" y="562.50" width="1.80" height="1.80" fill="#8c8c8c" />
<rect x="468.80" y="562.50" width="1.80" height="1.80" fill="#8c8c8c" />
<rect x="492.80" y="562.50" width="1.80" height="1.80" fill="#8c8c8c" />
<rect x="504.80" y="562.50" width="1.80" height="1.80" fill="#8c8c8c" />
<rect x="516.80" y="562.50" width="1.80" height="1.80" fill="#8c8c8c" />
<rect x="528.80" y="562.50" width="1.80" height="1.80" fill="#8c8c8c" />
<rect x="552.80" y="562.50" width="1.80" height="1.80" fill="#8c8c8c" />
<rect x="564.80" y="562.50" width="1.80" height="1.80" fill="#8c8c8c" />
<rect x="576.80" y="562.50" width="1.80" height="1.80" fill="#8c8c8c" />
<rect x="588.80" y="562.50" width="1.80" height="1.80" fill="#8c8c8c" />
<rect x="612.80" y="562.50" width="1.80" height="1.80" fill="#8c8c8c" />
<rect x="624.80" y="562.50" width="1.80" height="1.80" fill="#8c8c8c" />
<rect x="636.80" y="562.50" width="1.80" height="1.80" fill="#8c8c8c" />
<rect x="648.80" y="562.50" width="1.80" height="1.80" fill="#8c8c8c" />
<rect x="672.80" y="562.50" width="1.80" height="1.80" fill="#8c8c8c" />
<rect x="684.80" y="562.50" width="1.80" height="1.80" fill="#8c8c8c" />
<rect x="696.80" y="562.50" width="1.80" height="1.80" fill="#8c8c8c" />
<rect x="708.80" y="562.50" width="1.80" height="1.80" fill="#8c8c8c" />
<rect x="732.80" y="562.50" width="1.80" height="1.80" fill="#8c8c8c" />
<rect x="744.80" y="562.50" width="1.80" height="1.80" fill="#8c8c8c" />
<rect x="756.80" y="562.50" width="1.80" height="1.80" fill="#8c8c8c" />
<rect x="768.80" y="562.50" width="1.80" height="1.80" fill="#8c8c8c" />
<rect x="792.80" y="562.50" width="1.80" height="1.80" fill="#8c8c8c" />
<rect x="804.80" y="562.50" width="1.80" height="1.80" fill="#8c8c8c" />
<rect x="816.80" y="562.50" width="1.80" height="1.80" fill="#8c8c8c" />
<rect x="828.80" y="562.50" width="1.80" height="1.80" fill="#8c8c8c" />
<rect x="852.80" y="562.50" width="1.80" height="1.80" fill="#8c8c8c" />
<rect x="864.80" y="562.50" width="1.80" height="1.80" fill="#8c8c8c" />
<rect x="876.80" y="562.50" width="1.80" height="1.80" fill="#8c8c8c" />
<rect x="888.80" y="562.50" width="1.80" height="1.80" fill="#8c8c8c" />
<rect x="912.80" y="562.50" width="1.80" height="1.80" fill="#8c8c8c" />
<rect x="924.80" y="562.50" width="1.80" height="1.80" fill="#8c8c8c" />
<rect x="36.70" y="321.40" width="2.00" height="4.00" fill="#d8d8d8" />
<rect x="48.70" y="321.40" width="2.00" height="4.00" fill="#d8d8d8" />
<rect x="60.70" y="321.40" width="2.00" height="4.00" fill="#d8d8d8" />
<rect x="72.70" y="321.40" width="2.00" height="4.00" fill="#d8d8d8" />
<rect x="84.70" y="321.40" width="2.00" height="4.00" fill="#d8d8d8" />
<rect x="96.70" y="321.40" width="2.00" height="4.00" fill="#d8d8d8" />
<rect x="108.70" y="321.40" width="2.00" height="4.00" fill="#d8d8d8" />
<rect x="120.70" y="321.40" width="2.00" height="4.00" fill="#d8d8d8" />
<rect x="132.70" y="321.40" width="2.00" height="4.00" fill="#d8d8d8" />
<rect x="144.70" y="321.40" width="2.00" height="4.00" fill="#d8d8d8" />
<rect x="156.70" y="321.40" width="2.00" height="4.00" fill="#d8d8d8" />
<rect x="168.70" y="321.40" width="2.00" height="4.00" fill="#d8d8d8" />
<rect x="180.70" y="321.40" width="2.00" height="4.00" fill="#d8d8d8" />
<rect x="192.70" y="321.40" width="2.00" height="4.00" fill="#d8d8d8" />
<rect x="204.70" y="321.40" width="2.00" height="4.00" fill="#d8d8d8" />
<rect x="216.70" y="321.40" width="2.00" height="4.00" fill="#d8d8d8" />
<rect x="228.70" y="321.40" width="2.00" height="4.00" fill="#d8d8d8" />
<rect x="240.70" y="321.40" width="2.00" height="4.00" fill="#d8d8d8" />
<rect x="252.70" y="321.40" width="2.00" height="4.00" fill="#d8d8d8" />
<rect x="264.70" y="321.40" width="2.00" height="4.00" fill="#d8d8d8" />
<rect x="276.70" y="321.40" width="2.00" height="4.00" fill="#d8d8d8" />
<rect x="288.70" y="321.40" width="2.00" height="4.00" fill="#d8d8d8" />
<rect x="300.70" y="321.40" width="2.00" height="4.00" fill="#d8d8d8" />
<rect x="312.70" y="321.40" width="2.00" height="4.00" fill="#d8d8d8" />
<rect x="324.70" y="321.40" width="2.00" height="4.00" fill="#d8d8d8" />
<rect x="336.70" y="321.40" width="2.00" height="4.00" fill="#d8d8d8" />
<rect x="348.70" y="321.40" width="2.00" height="4.00" fill="#d8d8d8" />
<rect x="360.70" y="321.40" width="2.00" height="4.00" fill="#d8d8d8" />
<rect x="372.70" y="321.40" width="2.00" height="4.00" fill="#d8d8d8" />
<rect x="384.70" y="321.40" width="2.00" height="4.00" fill="#d8d8d8" />
<rect x="396.70" y="321.40" width="2.00" height="4.00" fill="#d8d8d8" />
<rect x="408.70" y="321.40" width="2.00" height="4.00" fill="#d8d8d8" />
<rect x="420.70" y="321.40" width="2.00" height="4.00" fill="#d8d8d8" />
<rect x="432.70" y="321.40" width="2.00" height="4.00" fill="#d8d8d8" />
<rect x="444.70" y="321.40" width="2.00" height="4.00" fill="#d8d8d8" />
<rect x="456.70" y="321.40" width="2.00" height="4.00" fill="#d8d8d8" />
<rect x="468.70" y="321.40" width="2.00" height="4.00" fill="#d8d8d8" />
<rect x="480.70" y="321.40" width="2.00" height="4.00" fill="#d8d8d8" />
<rect x="492.70" y="321.40" width="2.00" height="4.00" fill="#d8d8d8" />
<rect x="504.70" y="321.40" width="2.00" height="4.00" fill="#d8d8d8" />
<rect x="516.70" y="321.40" width="2.00" height="4.00" fill="#d8d8d8" />
<rect x="528.70" y="321.40" width="2.00" height="4.00" fill="#d8d8d8" />
<rect x="540.70" y="321.40" width="2.00" height="4.00" fill="#d8d8d8" />
<rect x="552.70" y="321.40" width="2.00" height="4.00" fill="#d8d8d8" />
<rect x="564.70" y="321.40" width="2.00" height="4.00" fill="#d8d8d8" />
<rect x="576.70" y="321.40" width="2.00" height="4.00" fill="#d8d8d8" />
<rect x="588.70" y="321.40" width="2.00" height="4.00" fill="#d8d8d8" />
<rect x="600.70" y="321.40" width="2.00" height="4.00" fill="#d8d8d8" />
<rect x="612.70" y="321.40" width="2.00" height="4.00" fill="#d8d8d8" />
<rect x="624.70" y="321.40" width="2.00" height="4.00" fill="#d8d8d8" />
<rect x="636.70" y="321.40" width="2.00" height="4.00" fill="#d8d8d8" />
<rect x="648.70" y="321.40" width="2.00" height="4.00" fill="#d8d8d8" />
<rect x="660.70" y="321.40" width="2.00" height="4.00" fill="#d8d8d8" />
<rect x="672.70" y="321.40" width="2.00" height="4.00" fill="#d8d8d8" />
<rect x="684.70" y="321.40" width="2.00" height="4.00" fill="#d8d8d8" />
<rect x="696.70" y="321.40" width="2.00" height="4.00" fill="#d8d8d8" />
<rect x="708.70" y="321.40" width="2.00" height="4.00" fill="#d8d8d8" />
<rect x="720.70" y="321.40" width="2.00" height="4.00" fill="#d8d8d8" />
<rect x="732.70" y="321.40" width="2.00" height="4.00" fill="#d8d8d8" />
<rect x="744.70" y="321.40" width="2.00" height="4.00" fill="#d8d8d8" />
<rect x="756.70" y="321.40" width="2.00" height="4.00" fill="#d8d8d8" />
<rect x="768.70" y="321.40" width="2.00" height="4.00" fill="#d8d8d8" />
<rect x="780.70" y="321.40" width="2.00" height="4.00" fill="#d8d8d8" />
<rect x="792.70" y="321.40" width="2.00" height="4.00" fill="#d8d8d8" />
<rect x="804.70" y="321.40" width="2.00" height="4.00" fill="#d8d8d8" />
<rect x="816.70" y="321.40" width="2.00" height="4.00" fill="#d8d8d8" />
<rect x="828.70" y="321.40" width="2.00" height="4.00" fill="#d8d8d8" />
<rect x="840.70" y="321.40" width="2.00" height="4.00" fill="#d8d8d8" />
<rect x="852.70" y="321.40" width="2.00" height="4.00" fill="#d8d8d8" />
<rect x="864.70" y="321.40" width="2.00" height="4.00" fill="#d8d8d8" />
<rect x="876.70" y="321.40" width="2.00" height="4.00" fill="#d8d8d8" />
<rect x="888.70" y="321.40" width="2.00" height="4.00" fill="#d8d8d8" />
<rect x="900.70" y="321.40" width="2.00" height="4.00" fill="#d8d8d8" />
<rect x="912.70" y="321.40" width="2.00" height="4.00" fill="#d8d8d8" />
<rect x="924.70" y="321.40" width="2.00" height="4.00" fill="#d8d8d8" />
<rect x="479.70" y="34.40" width="4.00" height="2.00" fill="#d8d8d8" />
<rect x="479.70" y="46.40" width="4.00" height="2.00" fill="#d8d8d8" />
<rect x="479.70" y="58.40" width="4.00" height="2.00" fill="#d8d8d8" />
<rect x="479.70" y="70.40" width="4.00" height="2.00" fill="#d8d8d8" />
<rect x="479.70" y="82.40" width="4.00" height="2.00" fill="#d8d8d8" />
<rect x="479.70" y="94.40" width="4.00" height="2.00" fill="#d8d8d8" />
<rect x="479.70" y="106.40" width="4.00" height="2.00" fill="#d8d8d8" />
<rect x="479.70" y="118.40" width="4.00" height="2.00" fill="#d8d8d8" />
<rect x="479.70" y="130.40" width="4.00" height="2.00" fill="#d8d8d8" />
<rect x="479.70" y="142.40" width="4.00" height="2.00" fill="#d8d8d8" />
<rect x="479.70" y="154.40" width="4.00" height="2.00" fill="#d8d8d8" />
<rect x="479.70" y="166.40" width="4.00" height="2.00" fill="#d8d8d8" />
<rect x="479.70" y="178.40" width="4.00" height="2.00" fill="#d8d8d8" />
<rect x="479.70" y="190.40" width="4.00" height="2.00" fill="#d8d8d8" />
<rect x="479.70" y="202.40" width="4.00" height="2.00" fill="#d8d8d8" />
<rect x="479.70" y="214.40" width="4.00" height="2.00" fill="#d8d8d8" />
<rect x="479.70" y="226.40" width="4.00" height="2.00" fill="#d8d8d8" />
<rect x="479.70" y="238.40" width="4.00" height="2.00" fill="#d8d8d8" />
<rect x="479.70" y="250.40" width="4.00" height="2.00" fill="#d8d8d8" />
<rect x="479.70" y="262.40" width="4.00" height="2.00" fill="#d8d8d8" />
<rect x="479.70" y="274.40" width="4.00" height="2.00" fill="#d8d8d8" />
<rect x="479.70" y="286.40" width="4.00" height="2.00" fill="#d8d8d8" />
<rect x="479.70" y="298.40" width="4.00" height="2.00" fill="#d8d8d8" />
<rect x="479.70" y="310.40" width="4.00" height="2.00" fill="#d8d8d8" />
<rect x="479.70" y="322.40" width="4.00" height="2.00" fill="#d8d8d8" />
<rect x="479.70" y="334.40" width="4.00" height="2.00" fill="#d8d8d8" />
<rect x="479.70" y="346.40" width="4.00" height="2.00" fill="#d8d8d8" />
<rect x="479.70" y="358.40" width="4.00" height="2.00" fill="#d8d8d8" />
<rect x="479.70" y="370.40" width="4.00" height="2.00" fill="#d8d8d8" />
<rect x="479.70" y="382.40" width="4.00" height="2.00" fill="#d8d8d8" />
<rect x="479.70" y="394.40" width="4.00" height="2.00" fill="#d8d8d8" />
<rect x="479.70" y="406.40" width="4.00" height="2.00" fill="#d8d8d8" />
<rect x="479.70" y="418.40" width="4.00" height="2.00" fill="#d8d8d8" />
<rect x="479.70" y="430.40" width="4.00" height="2.00" fill="#d8d8d8" />
<rect x="479.70" y="442.40" width="4.00" height="2.00" fill="#d8d8d8" />
<rect x="479.70" y="454.40" width="4.00" height="2.00" fill="#d8d8d8" />
<rect x="479.70" y="466.40" width="4.00" height="2.00" fill="#d8d8d8" />
<rect x="479.70" y="478.40" width="4.00" height="2.00" fill="#d8d8d8" />
<rect x="479.70" y="490.40" width="4.00" height="2.00" fill="#d8d8d8" />
<rect x="479.70" y="502.40" width="4.00" height="2.00" fill="#d8d8d8" />
<rect x="479.70" y="514.40" width="4.00" height="2.00" fill="#d8d8d8" />
<rect x="479.70" y="526.40" width="4.00" height="2.00" fill="#d8d8d8" />
<rect x="479.70" y="538.40" width="4.00" height="2.00" fill="#d8d8d8" />
<rect x="479.70" y="550.40" width="4.00" height="2.00" fill="#d8d8d8" />
<rect x="479.70" y="562.40" width="4.00" height="2.00" fill="#d8d8d8" />
<rect x="479.70" y="574.40" width="4.00" height="2.00" fill="#d8d8d8" />
<rect x="479.70" y="586.40" width="4.00" height="2.00" fill="#d8d8d8" />
<rect x="479.70" y="598.40" width="4.00" height="2.00" fill="#d8d8d8" />
<rect x="479.70" y="610.40" width="4.00" height="2.00" fill="#d8d8d8" />
<rect x="175.20" y="322.80" width="13.00" height="1.20" fill="#e0e0e0" />
<rect x="181.00" y="316.90" width="1.40" height="13.00" fill="#e0e0e0" />
<rect x="775.20" y="322.80" width="13.00" height="1.20" fill="#e0e0e0" />
<rect x="781.00" y="316.90" width="1.40" height="13.00" fill="#e0e0e0" />
<rect x="479.20" y="320.90" width="5.00" height="5.00" fill="#e0e0e0" />
<rect x="36.80" y="23.80" width="1.80" height="4.70" fill="#e8e8e8" />
<rect x="36.80" y="617.20" width="1.80" height="4.70" fill="#e8e8e8" />
<rect x="48.80" y="23.80" width="1.80" height="4.70" fill="#e8e8e8" />
<rect x="48.80" y="617.20" width="1.80" height="4.70" fill="#e8e8e8" />
<rect x="60.80" y="23.80" width="1.80" height="7.50" fill="#e8e8e8" />
<rect x="60.80" y="614.40" width="1.80" height="7.50" fill="#e8e8e8" />
<rect x="72.80" y="23.80" width="1.80" height="4.70" fill="#e8e8e8" />
<rect x="72.80" y="617.20" width="1.80" height="4.70" fill="#e8e8e8" />
<rect x="84.80" y="23.80" width="1.80" height="4.70" fill="#e8e8e8" />
<rect x="84.80" y="617.20" width="1.80" height="4.70" fill="#e8e8e8" />
<rect x="96.80" y="23.80" width="1.80" height="4.70" fill="#e8e8e8" />
<rect x="96.80" y="617.20" width="1.80" height="4.70" fill="#e8e8e8" />
<rect x="108.80" y="23.80" width="1.80" height="4.70" fill="#e8e8e8" />
<rect x="108.80" y="617.20" width="1.80" height="4.70" fill="#e8e8e8" />
<rect x="120.80" y="23.80" width="1.80" height="7.50" fill="#e8e8e8" />
<rect x="120.80" y="614.40" width="1.80" height="7.50" fill="#e8e8e8" />
<rect x="132.80" y="23.80" width="1.80" height="4.70" fill="#e8e8e8" />
<rect x="132.80" y="617.20" width="1.80" height="4.70" fill="#e8e8e8" />
<rect x="144.80" y="23.80" width="1.80" height="4.70" fill="#e8e8e8" />
<rect x="144.80" y="617.20" width="1.80" height="4.70" fill="#e8e8e8" />
<rect x="156.80" y="23.80" width="1.80" height="4.70" fill="#e8e8e8" />
<rect x="156.80" y="617.20" width="1.80" height="4.70" fill="#e8e8e8" />
<rect x="168.80" y="23.80" width="1.80" height="4.70" fill="#e8e8e8" />
<rect x="168.80" y="617.20" width="1.80" height="4.70" fill="#e8e8e8" />
<rect x="180.80" y="23.80" width="1.80" height="7.50" fill="#e8e8e8" />
<rect x="180.80" y="614.40" width="1.80" height="7.50" fill="#e8e8e8" />
<rect x="192.80" y="23.80" width="1.80" height="4.70" fill="#e8e8e8" />
<rect x="192.80" y="617.20" width="1.80" height="4.70" fill="#e8e8e8" />
<rect x="204.80" y="23.80" width="1.80" height="4.70" fill="#e8e8e8" />
<rect x="204.80" y="617.20" width="1.80" height="4.70" fill="#e8e8e8" />
<rect x="216.80" y="23.80" width="1.80" height="4.70" fill="#e8e8e8" />
<rect x="216.80" y="617.20" width="1.80" height="4.70" fill="#e8e8e8" />
<rect x="228.80" y="23.80" width="1.80" height="4.70" fill="#e8e8e8" />
<rect x="228.80" y="617.20" width="1.80" height="4.70" fill="#e8e8e8" />
<rect x="240.80" y="23.80" width="1.80" height="7.50" fill="#e8e8e8" />
<rect x="240.80" y="614.40" width="1.80" height="7.50" fill="#e8e8e8" />
<rect x="252.80" y="23.80" width="1.80" height="4.70" fill="#e8e8e8" />
<rect x="252.80" y="617.20" width="1.80" height="4.70" fill="#e8e8e8" />
<rect x="264.80" y="23.80" width="1.80" height="4.70" fill="#e8e8e8" />
<rect x="264.80" y="617.20" width="1.80" height="4.70" fill="#e8e8e8" />
<rect x="276.80" y="23.80" width="1.80" height="4.70" fill="#e8e8e8" />
<rect x="276.80" y="617.20" width="1.80" height="4.70" fill="#e8e8e8" />
<rect x="288.80" y="23.80" width="1.80" height="4.70" fill="#e8e8e8" />
<rect x="288.80" y="617.20" width="1.80" height="4.70" fill="#e8e8e8" />
<rect x="300.80" y="23.80" width="1.80" height="7.50" fill="#e8e8e8" />
<rect x="300.80" y="614.40" width="1.80" height="7.50" fill="#e8e8e8" />
<rect x="312.80" y="23.80" width="1.80" height="4.70" fill="#e8e8e8" />
<rect x="312.80" y="617.20" width="1.80" height="4.70" fill="#e8e8e8" />
<rect x="324.80" y="23.80" width="1.80" height="4.70" fill="#e8e8e8" />
<rect x="324.80" y="617.20" width="1.80" height="4.70" fill="#e8e8e8" />
<rect x="336.80" y="23.80" width="1.80" height="4.70" fill="#e8e8e8" />
<rect x="336.80" y="617.20" width="1.80" height="4.70" fill="#e8e8e8" />
<rect x="348.80" y="23.80" width="1.80" height="4.70" fill="#e8e8e8" />
<rect x="348.80" y="617.20" width="1.80" height="4.70" fill="#e8e8e8" />
<rect x="360.80" y="23.80" width="1.80" height="7.50" fill="#e8e8e8" />
<rect x="360.80" y="614.40" width="1.80" height="7.50" fill="#e8e8e8" />
<rect x="372.80" y="23.80" width="1.80" height="4.70" fill="#e8e8e8" />
<rect x="372.80" y="617.20" width="1.80" height="4.70" fill="#e8e8e8" />
<rect x="384.80" y="23.80" width="1.80" height="4.70" fill="#e8e8e8" />
<rect x="384.80" y="617.20" width="1.80" height="4.70" fill="#e8e8e8" />
<rect x="396.80" y="23.80" width="1.80" height="4.70" fill="#e8e8e8" />
<rect x="396.80" y="617.20" width="1.80" height="4.70" fill="#e8e8e8" />
<rect x="408.80" y="23.80" width="1.80" height="4.70" fill="#e8e8e8" />
<rect x="408.80" y="617.20" width="1.80" height="4.70" fill="#e8e8e8" />
<rect x="420.80" y="23.80" width="1.80" height="7.50" fill="#e8e8e8" />
<rect x="420.80" y="614.40" width="1.80" height="7.50" fill="#e8e8e8" />
<rect x="432.80" y="23.80" width="1.80" height="4.70" fill="#e8e8e8" />
<rect x="432.80" y="617.20" width="1.80" height="4.70" fill="#e8e8e8" />
<rect x="444.80" y="23.80" width="1.80" height="4.70" fill="#e8e8e8" />
<rect x="444.80" y="617.20" width="1.80" height="4.70" fill="#e8e8e8" />
<rect x="456.80" y="23.80" width="1.80" height="4.70" fill="#e8e8e8" />
<rect x="456.80" y="617.20" width="1.80" height="4.70" fill="#e8e8e8" />
<rect x="468.80" y="23.80" width="1.80" height="4.70" fill="#e8e8e8" />
<rect x="468.80" y="617.20" width="1.80" height="4.70" fill="#e8e8e8" />
<rect x="480.80" y="23.80" width="1.80" height="7.50" fill="#e8e8e8" />
<rect x="480.80" y="614.40" width="1.80" height="7.50" fill="#e8e8e8" />
<rect x="492.80" y="23.80" width="1.80" height="4.70" fill="#e8e8e8" />
<rect x="492.80" y="617.20" width="1.80" height="4.70" fill="#e8e8e8" />
<rect x="504.80" y="23.80" width="1.80" height="4.70" fill="#e8e8e8" />
<rect x="504.80" y="617.20" width="1.80" height="4.70" fill="#e8e8e8" />
<rect x="516.80" y="23.80" width="1.80" height="4.70" fill="#e8e8e8" />
<rect x="516.80" y="617.20" width="1.80" height="4.70" fill="#e8e8e8" />
<rect x="528.80" y="23.80" width="1.80" height="4.70" fill="#e8e8e8" />
<rect x="528.80" y="617.20" width="1.80" height="4.70" fill="#e8e8e8" />
<rect x="540.80" y="23.80" width="1.80" height="7.50" fill="#e8e8e8" />
<rect x="540.80" y="614.40" width="1.80" height="7.50" fill="#e8e8e8" />
<rect x="552.80" y="23.80" width="1.80" height="4.70" fill="#e8e8e8" />
<rect x="552.80" y="617.20" width="1.80" height="4.70" fill="#e8e8e8" />
<rect x="564.80" y="23.80" width="1.80" height="4.70" fill="#e8e8e8" />
<rect x="564.80" y="617.20" width="1.80" height="4.70" fill="#e8e8e8" />
<rect x="576.80" y="23.80" width="1.80" height="4.70" fill="#e8e8e8" />
<rect x="576.80" y="617.20" width="1.80" height="4.70" fill="#e8e8e8" />
<rect x="588.80" y="23.80" width="1.80" height="4.70" fill="#e8e8e8" />
<rect x="588.80" y="617.20" width="1.80" height="4.70" fill="#e8e8e8" />
<rect x="600.80" y="23.80" width="1.80" height="7.50" fill="#e8e8e8" />
<rect x="600.80" y="614.40" width="1.80" height="7.50" fill="#e8e8e8" />
<rect x="612.80" y="23.80" width="1.80" height="4.70" fill="#e8e8e8" />
<rect x="612.80" y="617.20" width="1.80" height="4.70" fill="#e8e8e8" />
<rect x="624.80" y="23.80" width="1.80" height="4.70" fill="#e8e8e8" />
<rect x="624.80" y="617.20" width="1.80" height="4.70" fill="#e8e8e8" />
<rect x="636.80" y="23.80" width="1.80" height="4.70" fill="#e8e8e8" />
<rect x="636.80" y="617.20" width="1.80" height="4.70" fill="#e8e8e8" />
<rect x="648.80" y="23.80" width="1.80" height="4.70" fill="#e8e8e8" />
<rect x="648.80" y="617.20" width="1.80" height="4.70" fill="#e8e8e8" />
<rect x="660.80" y="23.80" width="1.80" height="7.50" fill="#e8e8e8" />
<rect x="660.80" y="614.40" width="1.80" height="7.50" fill="#e8e8e8" />
<rect x="672.80" y="23.80" width="1.80" height="4.70" fill="#e8e8e8" />
<rect x="672.80" y="617.20" width="1.80" height="4.70" fill="#e8e8e8" />
<rect x="684.80" y="23.80" width="1.80" height="4.70" fill="#e8e8e8" />
<rect x="684.80" y="617.20" width="1.80" height="4.70" fill="#e8e8e8" />
<rect x="696.80" y="23.80" width="1.80" height="4.70" fill="#e8e8e8" />
<rect x="696.80" y="617.20" width="1.80" height="4.70" fill="#e8e8e8" />
<rect x="708.80" y="23.80" width="1.80" height="4.70" fill="#e8e8e8" />
<rect x="708.80" y="617.20" width="1.80" height="4.70" fill="#e8e8e8" />
<rect x="720.80" y="23.80" width="1.80" height="7.50" fill="#e8e8e8" />
<rect x="720.80" y="614.40" width="1.80" height="7.50" fill="#e8e8e8" />
<rect x="732.80" y="23.80" width="1.80" height="4.70" fill="#e8e8e8" />
<rect x="732.80" y="617.20" width="1.80" height="4.70" fill="#e8e8e8" />
<rect x="744.80" y="23.80" width="1.80" height="4.70" fill="#e8e8e8" />
<rect x="744.80" y="617.20" width="1.80" height="4.70" fill="#e8e8e8" />
<rect x="756.80" y="23.80" width="1.80" height="4.70" fill="#e8e8e8" />
<rect x="756.80" y="617.20" width="1.80" height="4.70" fill="#e8e8e8" />
<rect x="768.80" y="23.80" width="1.80" height="4.70" fill="#e8e8e8" />
<rect x="768.80" y="617.20" width="1.80" height="4.70" fill="#e8e8e8" />
<rect x="780.80" y="23.80" width="1.80" height="7.50" fill="#e8e8e8" />
<rect x="780.80" y="614.40" width="1.80" height="7.50" fill="#e8e8e8" />
<rect x="792.80" y="23.80" width="1.80" height="4.70" fill="#e8e8e8" />
<rect x="792.80" y="617.20" width="1.80" height="4.70" fill="#e8e8e8" />
<rect x="804.80" y="23.80" width="1.80" height="4.70" fill="#e8e8e8" />
<rect x="804.80" y="617.20" width="1.80" height="4.70" fill="#e8e8e8" />
<rect x="816.80" y="23.80" width="1.80" height="4.70" fill="#e8e8e8" />
<rect x="816.80" y="617.20" width="1.80" height="4.70" fill="#e8e8e8" />
<rect x="828.80" y="23.80" width="1.80" height="4.70" fill="#e8e8e8" />
<rect x="828.80" y="617.20" width="1.80" height="4.70" fill="#e8e8e8" />
<rect x="840.80" y="23.80" width="1.80" height="7.50" fill="#e8e8e8" />
<rect x="840.80" y="614.40" width="1.80" height="7.50" fill="#e8e8e8" />
<rect x="852.80" y="23.80" width="1.80" height="4.70" fill="#e8e8e8" />
<rect x="852.80" y="617.20" width="1.80" height="4.70" fill="#e8e8e8" />
<rect x="864.80" y="23.80" width="1.80" height="4.70" fill="#e8e8e8" />
<rect x="864.80" y="617.20" width="1.80" height="4.70" fill="#e8e8e8" />
<rect x="876.80" y="23.80" width="1.80" height="4.70" fill="#e8e8e8" />
<rect x="876.80" y="617.20" width="1.80" height="4.70" fill="#e8e8e8" />
<rect x="888.80" y="23.80" width="1.80" height="4.70" fill="#e8e8e8" />
<rect x="888.80" y="617.20" width="1.80" height="4.70" fill="#e8e8e8" />
<rect x="900.80" y="23.80" width="1.80" height="7.50" fill="#e8e8e8" />
<rect x="900.80" y="614.40" width="1.80" height="7.50" fill="#e8e8e8" />
<rect x="912.80" y="23.80" width="1.80" height="4.70" fill="#e8e8e8" />
<rect x="912.80" y="617.20" width="1.80" height="4.70" fill="#e8e8e8" />
<rect x="924.80" y="23.80" width="1.80" height="4.70" fill="#e8e8e8" />
<rect x="924.80" y="617.20" width="1.80" height="4.70" fill="#e8e8e8" />
<rect x="24.60" y="34.50" width="5.10" height="1.80" fill="#e8e8e8" />
<rect x="929.70" y="34.50" width="5.10" height="1.80" fill="#e8e8e8" />
<rect x="24.60" y="46.50" width="5.10" height="1.80" fill="#e8e8e8" />
<rect x="929.70" y="46.50" width="5.10" height="1.80" fill="#e8e8e8" />
<rect x="24.60" y="58.50" width="5.10" height="1.80" fill="#e8e8e8" />
<rect x="929.70" y="58.50" width="5.10" height="1.80" fill="#e8e8e8" />
<rect x="24.60" y="70.50" width="5.10" height="1.80" fill="#e8e8e8" />
<rect x="929.70" y="70.50" width="5.10" height="1.80" fill="#e8e8e8" />
<rect x="24.60" y="82.50" width="7.50" height="1.80" fill="#e8e8e8" />
<rect x="927.30" y="82.50" width="7.50" height="1.80" fill="#e8e8e8" />
<rect x="24.60" y="94.50" width="5.10" height="1.80" fill="#e8e8e8" />
<rect x="929.70" y="94.50" width="5.10" height="1.80" fill="#e8e8e8" />
<rect x="24.60" y="106.50" width="5.10" height="1.80" fill="#e8e8e8" />
<rect x="929.70" y="106.50" width="5.10" height="1.80" fill="#e8e8e8" />
<rect x="24.60" y="118.50" width="5.10" height="1.80" fill="#e8e8e8" />
<rect x="929.70" y="118.50" width="5.10" height="1.80" fill="#e8e8e8" />
<rect x="24.60" y="130.50" width="5.10" height="1.80" fill="#e8e8e8" />
<rect x="929.70" y="130.50" width="5.10" height="1.80" fill="#e8e8e8" />
<rect x="24.60" y="142.50" width="7.50" height="1.80" fill="#e8e8e8" />
<rect x="927.30" y="142.50" width="7.50" height="1.80" fill="#e8e8e8" />
<rect x="24.60" y="154.50" width="5.10" height="1.80" fill="#e8e8e8" />
<rect x="929.70" y="154.50" width="5.10" height="1.80" fill="#e8e8e8" />
<rect x="24.60" y="166.50" width="5.10" height="1.80" fill="#e8e8e8" />
<rect x="929.70" y="166.50" width="5.10" height="1.80" fill="#e8e8e8" />
<rect x="24.60" y="178.50" width="5.10" height="1.80" fill="#e8e8e8" />
<rect x="929.70" y="178.50" width="5.10" height="1.80" fill="#e8e8e8" />
<rect x="24.60" y="190.50" width="5.10" height="1.80" fill="#e8e8e8" />
<rect x="929.70" y="190.50" width="5.10" height="1.80" fill="#e8e8e8" />
<rect x="24.60" y="202.50" width="7.50" height="1.80" fill="#e8e8e8" />
<rect x="927.30" y="202.50" width="7.50" height="1.80" fill="#e8e8e8" />
<rect x="24.60" y="214.50" width="5.10" height="1.80" fill="#e8e8e8" />
<rect x="929.70" y="214.50" width="5.10" height="1.80" fill="#e8e8e8" />
<rect x="24.60" y="226.50" width="5.10" height="1.80" fill="#e8e8e8" />
<rect x="929.70" y="226.50" width="5.10" height="1.80" fill="#e8e8e8" />
<rect x="24.60" y="238.50" width="5.10" height="1.80" fill="#e8e8e8" />
<rect x="929.70" y="238.50" width="5.10" height="1.80" fill="#e8e8e8" />
<rect x="24.60" y="250.50" width="5.10" height="1.80" fill="#e8e8e8" />
<rect x="929.70" y="250.50" width="5.10" height="1.80" fill="#e8e8e8" />
<rect x="24.60" y="262.50" width="7.50" height="1.80" fill="#e8e8e8" />
<rect x="927.30" y="262.50" width="7.50" height="1.80" fill="#e8e8e8" />
<rect x="24.60" y="274.50" width="5.10" height="1.80" fill="#e8e8e8" />
<rect x="929.70" y="274.50" width="5.10" height="1.80" fill="#e8e8e8" />
<rect x="24.60" y="286.50" width="5.10" height="1.80" fill="#e8e8e8" />
<rect x="929.70" y="286.50" width="5.10" height="1.80" fill="#e8e8e8" />
<rect x="24.60" y="298.50" width="5.10" height="1.80" fill="#e8e8e8" />
<rect x="929.70" y="298.50" width="5.10" height="1.80" fill="#e8e8e8" />
<rect x="24.60" y="310.50" width="5.10" height="1.80" fill="#e8e8e8" />
<rect x="929.70" y="310.50" width="5.10" height="1.80" fill="#e8e8e8" />
<rect x="24.60" y="322.50" width="7.50" height="1.80" fill="#e8e8e8" />
<rect x="927.30" y="322.50" width="7.50" height="1.80" fill="#e8e8e8" />
<rect x="24.60" y="334.50" width="5.10" height="1.80" fill="#e8e8e8" />
<rect x="929.70" y="334.50" width="5.10" height="1.80" fill="#e8e8e8" />
<rect x="24.60" y="346.50" width="5.10" height="1.80" fill="#e8e8e8" />
<rect x="929.70" y="346.50" width="5.10" height="1.80" fill="#e8e8e8" />
<rect x="24.60" y="358.50" width="5.10" height="1.80" fill="#e8e8e8" />
<rect x="929.70" y="358.50" width="5.10" height="1.80" fill="#e8e8e8" />
<rect x="24.60" y="370.50" width="5.10" height="1.80" fill="#e8e8e8" />
<rect x="929.70" y="370.50" width="5.10" height="1.80" fill="#e8e8e8" />
<rect x="24.60" y="382.50" width="7.50" height="1.80" fill="#e8e8e8" />
<rect x="927.30" y="382.50" width="7.50" height="1.80" fill="#e8e8e8" />
<rect x="24.60" y="394.50" width="5.10" height="1.80" fill="#e8e8e8" />
<rect x="929.70" y="394.50" width="5.10" height="1.80" fill="#e8e8e8" />
<rect x="24.60" y="406.50" width="5.10" height="1.80" fill="#e8e8e8" />
<rect x="929.70" y="406.50" width="5.10" height="1.80" fill="#e8e8e8" />
<rect x="24.60" y="418.50" width="5.10" height="1.80" fill="#e8e8e8" />
<rect x="929.70" y="418.50" width="5.10" height="1.80" fill="#e8e8e8" />
<rect x="24.60" y="430.50" width="5.10" height="1.80" fill="#e8e8e8" />
<rect x="929.70" y="430.50" width="5.10" height="1.80" fill="#e8e8e8" />
<rect x="24.60" y="442.50" width="7.50" height="1.80" fill="#e8e8e8" />
<rect x="927.30" y="442.50" width="7.50" height="1.80" fill="#e8e8e8" />
<rect x="24.60" y="454.50" width="5.10" height="1.80" fill="#e8e8e8" />
<rect x="929.70" y="454.50" width="5.10" height="1.80" fill="#e8e8e8" />
<rect x="24.60" y="466.50" width="5.10" height="1.80" fill="#e8e8e8" />
<rect x="929.70" y="466.50" width="5.10" height="1.80" fill="#e8e8e8" />
<rect x="24.60" y="478.50" width="5.10" height="1.80" fill="#e8e8e8" />
<rect x="929.70" y="478.50" width="5.10" height="1.80" fill="#e8e8e8" />
<rect x="24.60" y="490.50" width="5.10" height="1.80" fill="#e8e8e8" />
<rect x="929.70" y="490.50" width="5.10" height="1.80" fill="#e8e8e8" />
<rect x="24.60" y="502.50" width="7.50" height="1.80" fill="#e8e8e8" />
<rect x="927.30" y="502.50" width="7.50" height="1.80" fill="#e8e8e8" />
<rect x="24.60" y="514.50" width="5.10" height="1.80" fill="#e8e8e8" />
<rect x="929.70" y="514.50" width="5.10" height="1.80" fill="#e8e8e8" />
<rect x="24.60" y="526.50" width="5.10" height="1.80" fill="#e8e8e8" />
<rect x="929.70" y="526.50" width="5.10" height="1.80" fill="#e8e8e8" />
<rect x="24.60" y="538.50" width="5.10" height="1.80" fill="#e8e8e8" />
<rect x="929.70" y="538.50" width="5.10" height="1.80" fill="#e8e8e8" />
<rect x="24.60" y="550.50" width="5.10" height="1.80" fill="#e8e8e8" />
<rect x="929.70" y="550.50" width="5.10" height="1.80" fill="#e8e8e8" />
<rect x="24.60" y="562.50" width="7.50" height="1.80" fill="#e8e8e8" />
<rect x="927.30" y="562.50" width="7.50" height="1.80" fill="#e8e8e8" />
<rect x="24.60" y="574.50" width="5.10" height="1.80" fill="#e8e8e8" />
<rect x="929.70" y="574.50" width="5.10" height="1.80" fill="#e8e8e8" />
<rect x="24.60" y="586.50" width="5.10" height="1.80" fill="#e8e8e8" />
<rect x="929.70" y="586.50" width="5.10" height="1.80" fill="#e8e8e8" />
<rect x="24.60" y="598.50" width="5.10" height="1.80" fill="#e8e8e8" />
<rect x="929.70" y="598.50" width="5.10" height="1.80" fill="#e8e8e8" />
<rect x="24.60" y="610.50" width="5.10" height="1.80" fill="#e8e8e8" />
<rect x="929.70" y="610.50" width="5.10" height="1.80" fill="#e8e8e8" />
<rect x="24.60" y="23.80" width="910.20" height="598.10" fill="none" stroke="#f4f4f4" stroke-width="2.3"/>
<rect x="25.60" y="284.00" width="908.20" height="3.00" fill="#eeee00" />
<rect x="25.60" y="287.00" width="170.40" height="2.20" fill="#eeee00" />
<rect x="196.00" y="287.00" width="5.00" height="2.20" fill="#eeee00" />
<rect x="203.00" y="287.00" width="5.00" height="2.20" fill="#eeee00" />
<rect x="209.00" y="287.00" width="3.00" height="2.20" fill="#eeee00" />
<rect x="214.00" y="287.00" width="7.00" height="2.20" fill="#eeee00" />
<rect x="222.00" y="287.00" width="2.00" height="2.20" fill="#eeee00" />
<rect x="226.00" y="287.00" width="4.00" height="2.20" fill="#eeee00" />
<rect x="231.00" y="287.00" width="2.00" height="2.20" fill="#eeee00" />
<rect x="234.00" y="287.00" width="6.00" height="2.20" fill="#eeee00" />
<rect x="242.00" y="287.00" width="5.00" height="2.20" fill="#eeee00" />
<rect x="248.00" y="287.00" width="6.00" height="2.20" fill="#eeee00" />
<rect x="255.00" y="287.00" width="6.00" height="2.20" fill="#eeee00" />
<rect x="262.00" y="287.00" width="2.00" height="2.20" fill="#eeee00" />
<rect x="265.00" y="287.00" width="3.00" height="2.20" fill="#eeee00" />
<rect x="269.00" y="287.00" width="6.00" height="2.20" fill="#eeee00" />
<rect x="276.00" y="287.00" width="5.00" height="2.20" fill="#eeee00" />
<rect x="282.00" y="287.00" width="5.00" height="2.20" fill="#eeee00" />
<rect x="288.00" y="287.00" width="6.00" height="2.20" fill="#eeee00" />
<rect x="295.00" y="287.00" width="7.00" height="2.20" fill="#eeee00" />
<rect x="303.00" y="287.00" width="5.00" height="2.20" fill="#eeee00" />
<rect x="309.00" y="287.00" width="7.00" height="2.20" fill="#eeee00" />
<rect x="317.00" y="287.00" width="5.00" height="2.20" fill="#eeee00" />
<rect x="323.00" y="287.00" width="5.00" height="2.20" fill="#eeee00" />
<rect x="329.00" y="287.00" width="7.00" height="2.20" fill="#eeee00" />
<rect x="337.00" y="287.00" width="4.00" height="2.20" fill="#eeee00" />
<rect x="342.00" y="287.00" width="6.00" height="2.20" fill="#eeee00" />
<rect x="349.00" y="287.00" width="2.00" height="2.20" fill="#eeee00" />
<rect x="352.00" y="287.00" width="6.00" height="2.20" fill="#eeee00" />
<rect x="359.00" y="287.00" width="5.00" height="2.20" fill="#eeee00" />
<rect x="365.00" y="287.00" width="4.00" height="2.20" fill="#eeee00" />
<rect x="371.00" y="287.00" width="2.00" height="2.20" fill="#eeee00" />
<rect x="374.00" y="287.00" width="7.00" height="2.20" fill="#eeee00" />
<rect x="382.00" y="287.00" width="3.00" height="2.20" fill="#eeee00" />
<rect x="386.00" y="287.00" width="2.00" height="2.20" fill="#eeee00" />
<rect x="390.00" y="287.00" width="5.00" height="2.20" fill="#eeee00" />
<rect x="397.00" y="287.00" width="5.00" height="2.20" fill="#eeee00" />
<rect x="403.00" y="287.00" width="6.00" height="2.20" fill="#eeee00" />
<rect x="410.00" y="287.00" width="7.00" height="2.20" fill="#eeee00" />
<rect x="418.00" y="287.00" width="4.00" height="2.20" fill="#eeee00" />
<rect x="423.00" y="287.00" width="4.00" height="2.20" fill="#eeee00" />
<rect x="428.00" y="287.00" width="2.00" height="2.20" fill="#eeee00" />
<rect x="432.00" y="287.00" width="2.00" height="2.20" fill="#eeee00" />
<rect x="435.00" y="287.00" width="3.00" height="2.20" fill="#eeee00" />
<rect x="439.00" y="287.00" width="2.00" height="2.20" fill="#eeee00" />
<rect x="442.00" y="287.00" width="5.00" height="2.20" fill="#eeee00" />
<rect x="449.00" y="287.00" width="3.00" height="2.20" fill="#eeee00" />
<rect x="453.00" y="287.00" width="5.00" height="2.20" fill="#eeee00" />
<rect x="459.00" y="287.00" width="7.00" height="2.20" fill="#eeee00" />
<rect x="467.00" y="287.00" width="5.00" height="2.20" fill="#eeee00" />
<rect x="474.00" y="287.00" width="2.00" height="2.20" fill="#eeee00" />
<rect x="478.00" y="287.00" width="5.00" height="2.20" fill="#eeee00" />
<rect x="484.00" y="287.00" width="2.00" height="2.20" fill="#eeee00" />
<rect x="487.00" y="287.00" width="6.00" height="2.20" fill="#eeee00" />
<rect x="494.00" y="287.00" width="2.00" height="2.20" fill="#eeee00" />
<rect x="497.00" y="287.00" width="3.00" height="2.20" fill="#eeee00" />
<rect x="502.00" y="287.00" width="6.00" height="2.20" fill="#eeee00" />
<rect x="509.00" y="287.00" width="2.00" height="2.20" fill="#eeee00" />
<rect x="512.00" y="287.00" width="3.00" height="2.20" fill="#eeee00" />
<rect x="517.00" y="287.00" width="4.00" height="2.20" fill="#eeee00" />
<rect x="522.00" y="287.00" width="6.00" height="2.20" fill="#eeee00" />
<rect x="529.00" y="287.00" width="4.00" height="2.20" fill="#eeee00" />
<rect x="535.00" y="287.00" width="2.00" height="2.20" fill="#eeee00" />
<rect x="538.00" y="287.00" width="2.00" height="2.20" fill="#eeee00" />
<rect x="541.00" y="287.00" width="5.00" height="2.20" fill="#eeee00" />
<rect x="548.00" y="287.00" width="1.00" height="2.20" fill="#eeee00" />
<rect x="553.00" y="287.00" width="3.00" height="2.20" fill="#eeee00" />
<rect x="558.00" y="287.00" width="5.00" height="2.20" fill="#eeee00" />
<rect x="566.00" y="287.00" width="2.00" height="2.20" fill="#eeee00" />
<rect x="572.00" y="287.00" width="4.00" height="2.20" fill="#eeee00" />
<rect x="580.00" y="287.00" width="2.00" height="2.20" fill="#eeee00" />
<rect x="585.00" y="287.00" width="2.00" height="2.20" fill="#eeee00" />
<rect x="589.00" y="287.00" width="3.00" height="2.20" fill="#eeee00" />
<rect x="594.00" y="287.00" width="5.00" height="2.20" fill="#eeee00" />
<rect x="601.00" y="287.00" width="2.00" height="2.20" fill="#eeee00" />
<rect x="605.00" y="287.00" width="5.00" height="2.20" fill="#eeee00" />
<rect x="612.00" y="287.00" width="4.00" height="2.20" fill="#eeee00" />
<rect x="619.00" y="287.00" width="5.00" height="2.20" fill="#eeee00" />
<rect x="625.00" y="287.00" width="4.00" height="2.20" fill="#eeee00" />
<rect x="630.00" y="287.00" width="1.00" height="2.20" fill="#eeee00" />
<rect x="632.00" y="287.00" width="1.00" height="2.20" fill="#eeee00" />
<rect x="637.00" y="287.00" width="3.00" height="2.20" fill="#eeee00" />
<rect x="642.00" y="287.00" width="4.00" height="2.20" fill="#eeee00" />
<rect x="648.00" y="287.00" width="4.00" height="2.20" fill="#eeee00" />
<rect x="656.00" y="287.00" width="4.00" height="2.20" fill="#eeee00" />
<rect x="662.00" y="287.00" width="5.00" height="2.20" fill="#eeee00" />
<rect x="669.00" y="287.00" width="1.00" height="2.20" fill="#eeee00" />
<rect x="672.00" y="287.00" width="2.00" height="2.20" fill="#eeee00" />
<rect x="677.00" y="287.00" width="5.00" height="2.20" fill="#eeee00" />
<rect x="686.00" y="287.00" width="5.00" height="2.20" fill="#eeee00" />
<rect x="692.00" y="287.00" width="3.00" height="2.20" fill="#eeee00" />
<rect x="697.00" y="287.00" width="2.00" height="2.20" fill="#eeee00" />
<rect x="700.00" y="287.00" width="1.00" height="2.20" fill="#eeee00" />
<rect x="703.00" y="287.00" width="4.00" height="2.20" fill="#eeee00" />
<rect x="710.00" y="287.00" width="2.00" height="2.20" fill="#eeee00" />
<rect x="713.00" y="287.00" width="1.00" height="2.20" fill="#eeee00" />
<rect x="716.00" y="287.00" width="3.00" height="2.20" fill="#eeee00" />
<rect x="721.00" y="287.00" width="5.00" height="2.20" fill="#eeee00" />
<rect x="730.00" y="287.00" width="2.00" height="2.20" fill="#eeee00" />
<rect x="733.00" y="287.00" width="3.00" height="2.20" fill="#eeee00" />
<rect x="738.00" y="287.00" width="4.00" height="2.20" fill="#eeee00" />
<rect x="744.00" y="287.00" width="5.00" height="2.20" fill="#eeee00" />
<rect x="753.00" y="287.00" width="2.00" height="2.20" fill="#eeee00" />
<rect x="759.00" y="287.00" width="1.00" height="2.20" fill="#eeee00" />
<rect x="761.00" y="287.00" width="4.00" height="2.20" fill="#eeee00" />
<rect x="767.00" y="287.00" width="3.00" height="2.20" fill="#eeee00" />
<rect x="771.00" y="287.00" width="1.00" height="2.20" fill="#eeee00" />
<rect x="776.00" y="287.00" width="1.00" height="2.20" fill="#eeee00" />
<rect x="780.00" y="287.00" width="1.00" height="2.20" fill="#eeee00" />
<rect x="783.00" y="287.00" width="3.00" height="2.20" fill="#eeee00" />
<rect x="788.00" y="287.00" width="1.00" height="2.20" fill="#eeee00" />
<rect x="790.00" y="287.00" width="4.00" height="2.20" fill="#eeee00" />
<rect x="798.00" y="287.00" width="3.00" height="2.20" fill="#eeee00" />
<rect x="802.00" y="287.00" width="2.00" height="2.20" fill="#eeee00" />
<rect x="806.00" y="287.00" width="3.00" height="2.20" fill="#eeee00" />
<rect x="810.00" y="287.00" width="4.00" height="2.20" fill="#eeee00" />
<rect x="815.00" y="287.00" width="4.00" height="2.20" fill="#eeee00" />
<rect x="820.00" y="287.00" width="4.00" height="2.20" fill="#eeee00" />
<rect x="828.00" y="287.00" width="1.00" height="2.20" fill="#eeee00" />
<rect x="833.00" y="287.00" width="4.00" height="2.20" fill="#eeee00" />
<rect x="840.00" y="287.00" width="5.00" height="2.20" fill="#eeee00" />
<rect x="846.00" y="287.00" width="5.00" height="2.20" fill="#eeee00" />
<rect x="852.00" y="287.00" width="1.00" height="2.20" fill="#eeee00" />
<rect x="854.00" y="287.00" width="1.00" height="2.20" fill="#eeee00" />
<rect x="857.00" y="287.00" width="4.00" height="2.20" fill="#eeee00" />
<rect x="863.00" y="287.00" width="4.00" height="2.20" fill="#eeee00" />
<rect x="871.00" y="287.00" width="4.00" height="2.20" fill="#eeee00" />
<rect x="878.00" y="287.00" width="4.00" height="2.20" fill="#eeee00" />
<rect x="886.00" y="287.00" width="1.00" height="2.20" fill="#eeee00" />
<rect x="891.00" y="287.00" width="5.00" height="2.20" fill="#eeee00" />
<rect x="897.00" y="287.00" width="3.00" height="2.20" fill="#eeee00" />
<rect x="904.00" y="287.00" width="1.00" height="2.20" fill="#eeee00" />
<rect x="908.00" y="287.00" width="1.00" height="2.20" fill="#eeee00" />
<rect x="911.00" y="287.00" width="1.00" height="2.20" fill="#eeee00" />
<rect x="915.00" y="287.00" width="5.00" height="2.20" fill="#eeee00" />
<rect x="923.00" y="287.00" width="3.00" height="2.20" fill="#eeee00" />
<rect x="927.00" y="287.00" width="3.00" height="2.20" fill="#eeee00" />
<rect x="932.00" y="287.00" width="1.80" height="2.20" fill="#eeee00" />
<rect x="194.50" y="283.50" width="3.00" height="2.50" fill="#000" />
<rect x="106.00" y="287.00" width="2.00" height="2.20" fill="#000" />
<rect x="368.00" y="287.00" width="2.00" height="2.20" fill="#000" />
<rect x="704.00" y="287.00" width="2.00" height="2.20" fill="#000" />
<rect x="730.00" y="287.00" width="2.00" height="2.20" fill="#000" />
<rect x="245.00" y="281.50" width="1.20" height="3.00" fill="#eeee00" />
<rect x="476.00" y="281.50" width="1.20" height="3.00" fill="#eeee00" />
<rect x="573.00" y="281.50" width="1.20" height="3.00" fill="#eeee00" />
<rect x="651.00" y="281.50" width="1.20" height="3.00" fill="#eeee00" />
<rect x="672.00" y="281.50" width="1.20" height="3.00" fill="#eeee00" />
<rect x="700.00" y="281.50" width="1.20" height="3.00" fill="#eeee00" />
<rect x="762.00" y="281.50" width="1.20" height="3.00" fill="#eeee00" />
<rect x="790.00" y="281.50" width="1.20" height="3.00" fill="#eeee00" />
<rect x="822.00" y="281.50" width="1.20" height="3.00" fill="#eeee00" />
<rect x="851.00" y="281.50" width="1.20" height="3.00" fill="#eeee00" />
<rect x="880.00" y="281.50" width="1.20" height="3.00" fill="#eeee00" />
<rect x="905.00" y="281.50" width="1.20" height="3.00" fill="#eeee00" />
<rect x="311.8" y="10.2" width="337" height="1.7" fill="#b8b834"/>
<rect x="309.4" y="2.1" width="6.2" height="2.9" fill="#d030d8" rx="1"/>
<rect x="312" y="4.8" width="1.4" height="3.2" fill="#b890d0"/>
<path d="M353.8 22.5 V3.5 H356.5" fill="none" stroke="#d4d0dc" stroke-width="2"/>
<path d="M606.2 22.5 V3.5 H603.5" fill="none" stroke="#d4d0dc" stroke-width="2"/>
<path d="M677.2 4.5 H691.2 V16.2 L684.2 20 L677.2 16.2 Z" fill="#000" stroke="#9030d0" stroke-width="1.8"/>
<rect x="679.6" y="7.9" width="9.4" height="1.8" fill="#b040e0"/>
<rect x="683.4" y="8" width="1.9" height="8.6" fill="#a848d8"/>
<path d="M910.5 12.5 L918.5 9.3 L921.2 14 L912 18.2 Z" fill="#1e3c88" stroke="#1848a8" stroke-width="1.2"/>
<path d="M910.5 12.5 L912 18.2 L921.2 14" fill="none" stroke="#dcc0d4" stroke-width="1.6"/>
<path d="M913.5 13.2 L917 11.8 L918.3 13.6 L914.6 15.2 Z" fill="#5a3848"/>
<path d="M910.3 10.5 L911 16" stroke="#a8d8d8" stroke-width="1.4"/>
<ellipse cx="913" cy="6.5" rx="3.2" ry="3" fill="#28a818"/>
<ellipse cx="909.5" cy="8" rx="2.8" ry="3.4" fill="#58d058"/>
<path d="M25 24.5 H32.8 V37 L27 40 H25 Z" fill="#000" stroke="#9a30d8" stroke-width="1.8"/>
<path d="M26 29 H30 V35" fill="none" stroke="#c040e0" stroke-width="1.6"/>
<path d="M0.8 313.8 H17.5 L23.5 323.5 L17.5 333.2 H0.8 Z" fill="#000" stroke="#e0e020" stroke-width="1.6"/>
<text x="4" y="331" font-family="Liberation Sans" font-size="17" fill="#e0e020">2</text>
<path d="M937 323.5 L952 318 L952 329 Z" fill="#b020e0"/>
<path d="M822 642.4 H832.3 L837.5 627 H846.4" fill="none" stroke="#dcdcdc" stroke-width="1.6"/>
</svg>
</body></html>
